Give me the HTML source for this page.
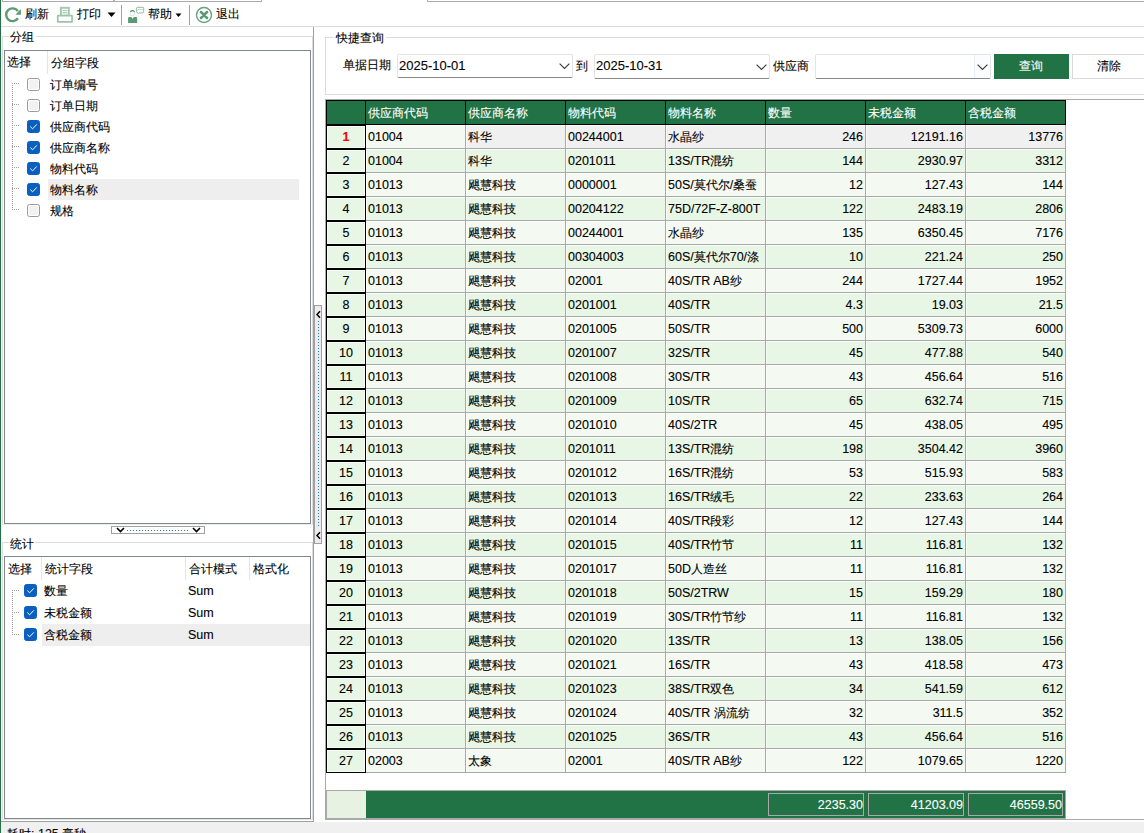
<!DOCTYPE html>
<html><head><meta charset="utf-8"><style>
html,body{margin:0;padding:0}
body{width:1144px;height:833px;overflow:hidden;position:relative;background:#fff;font-family:"Liberation Sans",sans-serif;font-size:12.5px;color:#000}
.a{position:absolute}
.t{position:absolute;line-height:20px;white-space:pre;-webkit-text-stroke:0.1px currentColor}
.c{font-size:12px}
.cb{position:absolute;width:11px;height:11px;border:1px solid #9a9a9a;border-radius:2.5px;background:#f2f2f2;box-shadow:inset 0 0 0 1px #fff}
.cb.on{background:#0a60c0;border-color:#0a60c0;box-shadow:none}
.cb svg{position:absolute;left:-1px;top:-1px}
.dh{height:1px;background:repeating-linear-gradient(90deg,#a0a0a0 0 1px,transparent 1px 2px)}
.dv{width:1px;background:repeating-linear-gradient(180deg,#a0a0a0 0 1px,transparent 1px 2px)}
</style></head><body>
<div class="a" style="left:2px;top:1px;width:260px;height:1px;background:#ababab;"></div>
<div class="a" style="left:113px;top:0px;width:2px;height:1px;background:#b4b4b4;"></div>
<div class="a" style="left:2px;top:0px;width:1px;height:2px;background:#ababab;"></div>
<div class="a" style="left:261px;top:0px;width:1px;height:2px;background:#ababab;"></div>
<div class="a" style="left:427px;top:1px;width:717px;height:1px;background:#ababab;"></div>
<div class="a" style="left:427px;top:0px;width:1px;height:2px;background:#ababab;"></div>
<div class="a" style="left:0px;top:0px;width:1px;height:833px;background:#217346;"></div>
<div class="a" style="left:1px;top:26px;width:1143px;height:1px;background:#dcdcdc;"></div>
<svg class="a" style="left:4px;top:6px" width="18" height="18" viewBox="0 0 18 18">
<path d="M13.93 12.24 A6.4 6.4 0 1 1 13.9 5.2" fill="none" stroke="#5b9a72" stroke-width="2.4"/>
<path d="M16.9 3 L16.9 8.8 L11.4 8.8 Z" fill="#5b9a72"/></svg>
<div class="t" style="left:25px;top:4px;color:#000;"><span class="c">刷新</span></div>
<svg class="a" style="left:56px;top:6px" width="18" height="18" viewBox="0 0 18 18">
<rect x="4.9" y="1.8" width="7.9" height="8" fill="#fff" stroke="#a3c9b0" stroke-width="1.9"/>
<rect x="6.4" y="4" width="5" height="0.9" fill="#a3c9b0"/><rect x="6.4" y="6.1" width="5" height="0.9" fill="#a3c9b0"/>
<rect x="6.4" y="7.2" width="5" height="2" fill="#dcebe1"/>
<rect x="1.75" y="9.65" width="14.3" height="6.2" rx="0.4" fill="#fff" stroke="#9cc5a9" stroke-width="1.7"/></svg>
<div class="t" style="left:77px;top:4px;color:#000;"><span class="c">打印</span></div>
<svg class="a" style="left:107px;top:12px" width="10" height="6"><path d="M0.5 0.5 L8.5 0.5 L4.5 5 Z" fill="#000"/></svg>
<div class="a" style="left:121px;top:5px;width:1px;height:20px;background:#a0a0a0;"></div>
<svg class="a" style="left:126px;top:6px" width="20" height="18" viewBox="0 0 20 18">
<path d="M10.6 2.2 Q10.6 1.3 11.6 1.3 L16.8 1.3 Q17.7 1.3 17.7 2.2 L17.7 5.6 Q17.7 6.9 16.4 6.9 L13.2 6.9 L12.4 7.6 L11.9 6.9 Q10.6 6.9 10.6 5.6 Z" fill="#fff" stroke="#7fb48f" stroke-width="0.9"/>
<rect x="11.6" y="3.1" width="5.2" height="0.7" fill="#a9cdb5"/>
<circle cx="6.3" cy="7.6" r="2.3" fill="#fff" stroke="#d5e7db" stroke-width="0.8"/>
<path d="M3.9 6.6 Q3.8 3.9 6.4 3.9 Q9 3.9 8.8 6.6 Q8.2 5.4 6.3 5.3 Q4.5 5.4 3.9 6.6 Z" fill="#4f8f66"/>
<path d="M2.1 16.9 L2.1 12.2 Q2.1 10.9 3.5 10.9 L5.4 10.9 L6.6 13.2 L7.8 10.9 L9.8 10.9 Q11.2 10.9 11.2 12.2 L11.2 16.9 Z" fill="#5b9a72"/>
<path d="M6.2 12.5 L6.6 16 L7 12.5 Z" fill="#5b9a72"/></svg>
<div class="t" style="left:148px;top:4px;color:#000;"><span class="c">帮助</span></div>
<svg class="a" style="left:175px;top:13px" width="8" height="5"><path d="M0.5 0.5 L6.5 0.5 L3.5 4 Z" fill="#000"/></svg>
<div class="a" style="left:189px;top:5px;width:1px;height:20px;background:#a0a0a0;"></div>
<svg class="a" style="left:195px;top:6px" width="18" height="18" viewBox="0 0 18 18">
<circle cx="9" cy="9" r="7.5" fill="none" stroke="#68a27e" stroke-width="1.4"/>
<path d="M6 6 L12 12 M12 6 L6 12" stroke="#5b9a72" stroke-width="2.5" stroke-linecap="round"/><rect x="7.4" y="7.4" width="3.2" height="3.2" fill="#5b9a72"/></svg>
<div class="t" style="left:216px;top:4px;color:#000;"><span class="c">退出</span></div>
<div class="a" style="left:313px;top:27px;width:1px;height:795px;background:#a0a0a0;"></div>
<div class="a" style="left:1px;top:821px;width:313px;height:1px;background:#a0a0a0;"></div>
<div class="a" style="left:2px;top:36px;width:7px;height:1px;background:#dcdcdc;"></div>
<div class="a" style="left:36px;top:36px;width:277px;height:1px;background:#dcdcdc;"></div>
<div class="a" style="left:2px;top:36px;width:1px;height:489px;background:#dcdcdc;"></div>
<div class="a" style="left:312px;top:36px;width:1px;height:489px;background:#dcdcdc;"></div>
<div class="t" style="left:10px;top:27px;color:#000;"><span class="c">分组</span></div>
<div class="a" style="left:4px;top:50px;width:305px;height:472px;border:1px solid #828790;background:#fff"></div>
<div class="a" style="left:2px;top:524px;width:311px;height:1px;background:#ececec;"></div>
<div class="t" style="left:7px;top:52px;color:#000;"><span class="c">选择</span></div>
<div class="a" style="left:47px;top:51px;width:1px;height:23px;background:#e5e5e5;"></div>
<div class="t" style="left:51px;top:53px;color:#000;"><span class="c">分组字段</span></div>
<div class="a" style="left:48px;top:179px;width:251px;height:21px;background:#eeeeee;"></div>
<div class="cb" style="left:27px;top:78px"></div>
<div class="t" style="left:50px;top:75px;color:#000;"><span class="c">订单编号</span></div>
<div class="a dh" style="left:12px;top:83px;width:8px"></div>
<div class="cb" style="left:27px;top:99px"></div>
<div class="t" style="left:50px;top:96px;color:#000;"><span class="c">订单日期</span></div>
<div class="a dh" style="left:12px;top:104px;width:8px"></div>
<div class="cb on" style="left:27px;top:120px"><svg width="13" height="13"><path d="M3.3 6.6 L5.6 8.8 L9.8 4.4" fill="none" stroke="#fff" stroke-width="1"/></svg></div>
<div class="t" style="left:50px;top:117px;color:#000;"><span class="c">供应商代码</span></div>
<div class="a dh" style="left:12px;top:125px;width:8px"></div>
<div class="cb on" style="left:27px;top:141px"><svg width="13" height="13"><path d="M3.3 6.6 L5.6 8.8 L9.8 4.4" fill="none" stroke="#fff" stroke-width="1"/></svg></div>
<div class="t" style="left:50px;top:138px;color:#000;"><span class="c">供应商名称</span></div>
<div class="a dh" style="left:12px;top:146px;width:8px"></div>
<div class="cb on" style="left:27px;top:162px"><svg width="13" height="13"><path d="M3.3 6.6 L5.6 8.8 L9.8 4.4" fill="none" stroke="#fff" stroke-width="1"/></svg></div>
<div class="t" style="left:50px;top:159px;color:#000;"><span class="c">物料代码</span></div>
<div class="a dh" style="left:12px;top:167px;width:8px"></div>
<div class="cb on" style="left:27px;top:183px"><svg width="13" height="13"><path d="M3.3 6.6 L5.6 8.8 L9.8 4.4" fill="none" stroke="#fff" stroke-width="1"/></svg></div>
<div class="t" style="left:50px;top:180px;color:#000;"><span class="c">物料名称</span></div>
<div class="a dh" style="left:12px;top:188px;width:8px"></div>
<div class="cb" style="left:27px;top:204px"></div>
<div class="t" style="left:50px;top:201px;color:#000;"><span class="c">规格</span></div>
<div class="a dh" style="left:12px;top:209px;width:8px"></div>
<div class="a dv" style="left:12px;top:83px;height:127px"></div>
<div class="a" style="left:111px;top:526px;width:92px;height:6px;border:1px solid #a0a0a0;background:#fff"></div>
<svg class="a" style="left:116px;top:527px" width="10" height="6"><path d="M1 1 L4.5 4.5 L8 1" fill="none" stroke="#000" stroke-width="1.6"/></svg>
<svg class="a" style="left:192px;top:527px" width="10" height="6"><path d="M1 1 L4.5 4.5 L8 1" fill="none" stroke="#000" stroke-width="1.6"/></svg>
<div class="a" style="left:127px;top:530px;width:62px;height:1px;background:repeating-linear-gradient(90deg,#1a7fe0 0 1px,transparent 1px 3px)"></div>
<div class="a" style="left:2px;top:542px;width:7px;height:1px;background:#dcdcdc;"></div>
<div class="a" style="left:35px;top:542px;width:278px;height:1px;background:#dcdcdc;"></div>
<div class="a" style="left:2px;top:542px;width:1px;height:278px;background:#dcdcdc;"></div>
<div class="a" style="left:312px;top:542px;width:1px;height:278px;background:#dcdcdc;"></div>
<div class="a" style="left:2px;top:819px;width:311px;height:1px;background:#e4e4e4;"></div>
<div class="t" style="left:10px;top:534px;color:#000;"><span class="c">统计</span></div>
<div class="a" style="left:4px;top:556px;width:305px;height:261px;border:1px solid #828790;background:#fff"></div>
<div class="t" style="left:8px;top:559px;color:#000;"><span class="c">选择</span></div>
<div class="a" style="left:41px;top:557px;width:1px;height:23px;background:#e5e5e5;"></div>
<div class="t" style="left:45px;top:559px;color:#000;"><span class="c">统计字段</span></div>
<div class="a" style="left:185px;top:557px;width:1px;height:23px;background:#e5e5e5;"></div>
<div class="t" style="left:189px;top:559px;color:#000;"><span class="c">合计模式</span></div>
<div class="a" style="left:249px;top:557px;width:1px;height:23px;background:#e5e5e5;"></div>
<div class="t" style="left:253px;top:559px;color:#000;"><span class="c">格式化</span></div>
<div class="a" style="left:42px;top:624px;width:268px;height:22px;background:#eeeeee;"></div>
<div class="cb on" style="left:24px;top:584px"><svg width="13" height="13"><path d="M3.3 6.6 L5.6 8.8 L9.8 4.4" fill="none" stroke="#fff" stroke-width="1"/></svg></div>
<div class="t" style="left:44px;top:581px;color:#000;"><span class="c">数量</span></div>
<div class="t" style="left:188px;top:581px;color:#000;">Sum</div>
<div class="a dh" style="left:12px;top:590px;width:8px"></div>
<div class="cb on" style="left:24px;top:606px"><svg width="13" height="13"><path d="M3.3 6.6 L5.6 8.8 L9.8 4.4" fill="none" stroke="#fff" stroke-width="1"/></svg></div>
<div class="t" style="left:44px;top:603px;color:#000;"><span class="c">未税金额</span></div>
<div class="t" style="left:188px;top:603px;color:#000;">Sum</div>
<div class="a dh" style="left:12px;top:612px;width:8px"></div>
<div class="cb on" style="left:24px;top:628px"><svg width="13" height="13"><path d="M3.3 6.6 L5.6 8.8 L9.8 4.4" fill="none" stroke="#fff" stroke-width="1"/></svg></div>
<div class="t" style="left:44px;top:625px;color:#000;"><span class="c">含税金额</span></div>
<div class="t" style="left:188px;top:625px;color:#000;">Sum</div>
<div class="a dh" style="left:12px;top:634px;width:8px"></div>
<div class="a dv" style="left:12px;top:590px;height:45px"></div>
<div class="a" style="left:1px;top:822px;width:1143px;height:11px;background:#f0f0f0;"></div>
<div class="t" style="left:7px;top:824px;color:#000;"><span class="c">耗时</span>: 125 <span class="c">毫秒</span></div>
<div class="a" style="left:314px;top:305px;width:6px;height:237px;border:1px solid #a0a0a0;background:#ececec"></div>
<svg class="a" style="left:316px;top:310px" width="6" height="10"><path d="M4 1.2 L1 4.5 L4 7.8" fill="none" stroke="#000" stroke-width="1.5"/></svg>
<svg class="a" style="left:316px;top:531px" width="6" height="10"><path d="M4 1.2 L1 4.5 L4 7.8" fill="none" stroke="#000" stroke-width="1.5"/></svg>
<div class="a" style="left:318px;top:321px;width:1px;height:206px;background:repeating-linear-gradient(180deg,#1a7fe0 0 1px,transparent 1px 3px)"></div>
<div class="a" style="left:325px;top:37px;width:9px;height:1px;background:#dcdcdc;"></div>
<div class="a" style="left:386px;top:37px;width:758px;height:1px;background:#dcdcdc;"></div>
<div class="a" style="left:325px;top:37px;width:1px;height:58px;background:#dcdcdc;"></div>
<div class="a" style="left:325px;top:94px;width:819px;height:1px;background:#dcdcdc;"></div>
<div class="t" style="left:336px;top:28px;color:#000;"><span class="c">快捷查询</span></div>
<div class="t" style="left:343px;top:55px;color:#000;"><span class="c">单据日期</span></div>
<div class="a" style="left:397px;top:54px;width:174px;height:22px;border:1px solid #e3e3e3;border-bottom-color:#868686;border-radius:2px;background:#fff"></div>
<svg class="a" style="left:559px;top:63px" width="11" height="7"><path d="M0.6 0.6 L5.5 5.5 L10.4 0.6" fill="none" stroke="#3c3c3c" stroke-width="1.15"/></svg>
<div class="t" style="left:399px;top:56px;color:#000;font-size:13px">2025-10-01</div>
<div class="t" style="left:576px;top:56px;color:#000;"><span class="c">到</span></div>
<div class="a" style="left:594px;top:54px;width:174px;height:23px;border:1px solid #e3e3e3;border-bottom-color:#868686;border-radius:2px;background:#fff"></div>
<svg class="a" style="left:756px;top:64px" width="11" height="7"><path d="M0.6 0.6 L5.5 5.5 L10.4 0.6" fill="none" stroke="#3c3c3c" stroke-width="1.15"/></svg>
<div class="t" style="left:596px;top:56px;color:#000;font-size:13px">2025-10-31</div>
<div class="t" style="left:773px;top:56px;color:#000;"><span class="c">供应商</span></div>
<div class="a" style="left:815px;top:54px;width:174px;height:23px;border:1px solid #e3e3e3;border-bottom-color:#868686;border-radius:2px;background:#fff"></div>
<svg class="a" style="left:977px;top:64px" width="11" height="7"><path d="M0.6 0.6 L5.5 5.5 L10.4 0.6" fill="none" stroke="#3c3c3c" stroke-width="1.15"/></svg>
<div class="a" style="left:974px;top:55px;width:1px;height:23px;background:#e8eef6;"></div>
<div class="a" style="left:975px;top:55px;width:15px;height:23px;background:#fbfcfd;"></div>
<svg class="a" style="left:977px;top:64px" width="11" height="7"><path d="M0.6 0.6 L5.5 5.5 L10.4 0.6" fill="none" stroke="#3c3c3c" stroke-width="1.15"/></svg>
<div class="a" style="left:994px;top:54px;width:75px;height:25px;background:#217346;"></div>
<div class="t" style="left:1019px;top:56px;color:#fff;"><span class="c">查询</span></div>
<div class="a" style="left:1072px;top:54px;width:90px;height:23px;border:1px solid #d9d9d9;background:#fff"></div>
<div class="t" style="left:1097px;top:56px;color:#000;"><span class="c">清除</span></div>
<div class="a" style="left:325px;top:99px;width:819px;height:1px;background:#a9a9a9;"></div>
<div class="a" style="left:325px;top:99px;width:1px;height:721px;background:#a9a9a9;"></div>
<div class="a" style="left:326px;top:100px;width:740px;height:25px;background:#000;"></div>
<div class="a" style="left:327px;top:101px;width:38px;height:23px;background:#217346;"></div>
<div class="a" style="left:366px;top:101px;width:99px;height:23px;background:#217346;"></div>
<div class="t" style="left:368px;top:103px;color:#fff;"><span class="c">供应商代码</span></div>
<div class="a" style="left:466px;top:101px;width:99px;height:23px;background:#217346;"></div>
<div class="t" style="left:468px;top:103px;color:#fff;"><span class="c">供应商名称</span></div>
<div class="a" style="left:566px;top:101px;width:99px;height:23px;background:#217346;"></div>
<div class="t" style="left:568px;top:103px;color:#fff;"><span class="c">物料代码</span></div>
<div class="a" style="left:666px;top:101px;width:99px;height:23px;background:#217346;"></div>
<div class="t" style="left:668px;top:103px;color:#fff;"><span class="c">物料名称</span></div>
<div class="a" style="left:766px;top:101px;width:99px;height:23px;background:#217346;"></div>
<div class="t" style="left:768px;top:103px;color:#fff;"><span class="c">数量</span></div>
<div class="a" style="left:866px;top:101px;width:99px;height:23px;background:#217346;"></div>
<div class="t" style="left:868px;top:103px;color:#fff;"><span class="c">未税金额</span></div>
<div class="a" style="left:966px;top:101px;width:99px;height:23px;background:#217346;"></div>
<div class="t" style="left:968px;top:103px;color:#fff;"><span class="c">含税金额</span></div>
<div class="a" style="left:327px;top:126px;width:38px;height:22px;background:#e8f6e5;box-shadow:inset 0 0 0 1px #f7fbf5"></div>
<div class="t" style="left:246px;width:200px;text-align:center;top:127px;color:#ff0000;font-weight:bold">1</div>
<div class="a" style="left:366px;top:125px;width:99px;height:23px;background:#f4faf2;box-shadow:inset 1px 1px 0 rgba(255,255,255,.7)"></div>
<div class="t" style="left:368px;top:127px;color:#000;">01004</div>
<div class="a" style="left:466px;top:125px;width:99px;height:23px;background:#f0f0f0;box-shadow:inset 1px 1px 0 rgba(255,255,255,.7)"></div>
<div class="t" style="left:468px;top:127px;color:#000;"><span class="c">科华</span></div>
<div class="a" style="left:566px;top:125px;width:99px;height:23px;background:#f0f0f0;box-shadow:inset 1px 1px 0 rgba(255,255,255,.7)"></div>
<div class="t" style="left:568px;top:127px;color:#000;">00244001</div>
<div class="a" style="left:666px;top:125px;width:99px;height:23px;background:#f0f0f0;box-shadow:inset 1px 1px 0 rgba(255,255,255,.7)"></div>
<div class="t" style="left:668px;top:127px;color:#000;"><span class="c">水晶纱</span></div>
<div class="a" style="left:766px;top:125px;width:99px;height:23px;background:#f0f0f0;box-shadow:inset 1px 1px 0 rgba(255,255,255,.7)"></div>
<div class="t" style="left:663px;width:200px;text-align:right;top:127px;color:#000;">246</div>
<div class="a" style="left:866px;top:125px;width:99px;height:23px;background:#f0f0f0;box-shadow:inset 1px 1px 0 rgba(255,255,255,.7)"></div>
<div class="t" style="left:763px;width:200px;text-align:right;top:127px;color:#000;">12191.16</div>
<div class="a" style="left:966px;top:125px;width:99px;height:23px;background:#f0f0f0;box-shadow:inset 1px 1px 0 rgba(255,255,255,.7)"></div>
<div class="t" style="left:863px;width:200px;text-align:right;top:127px;color:#000;">13776</div>
<div class="a" style="left:366px;top:148px;width:700px;height:1px;background:#a9a9a9;"></div>
<div class="a" style="left:365px;top:125px;width:1px;height:24px;background:#000;"></div>
<div class="a" style="left:465px;top:125px;width:1px;height:24px;background:#a9a9a9;"></div>
<div class="a" style="left:565px;top:125px;width:1px;height:24px;background:#a9a9a9;"></div>
<div class="a" style="left:665px;top:125px;width:1px;height:24px;background:#a9a9a9;"></div>
<div class="a" style="left:765px;top:125px;width:1px;height:24px;background:#a9a9a9;"></div>
<div class="a" style="left:865px;top:125px;width:1px;height:24px;background:#a9a9a9;"></div>
<div class="a" style="left:965px;top:125px;width:1px;height:24px;background:#a9a9a9;"></div>
<div class="a" style="left:1065px;top:125px;width:1px;height:24px;background:#a9a9a9;"></div>
<div class="a" style="left:327px;top:150px;width:38px;height:22px;background:#e8f6e5;box-shadow:inset 0 0 0 1px #f7fbf5"></div>
<div class="t" style="left:246px;width:200px;text-align:center;top:151px;color:#000;">2</div>
<div class="a" style="left:366px;top:149px;width:99px;height:23px;background:#e8f6e5;box-shadow:inset 1px 1px 0 rgba(255,255,255,.7)"></div>
<div class="t" style="left:368px;top:151px;color:#000;">01004</div>
<div class="a" style="left:466px;top:149px;width:99px;height:23px;background:#e8f6e5;box-shadow:inset 1px 1px 0 rgba(255,255,255,.7)"></div>
<div class="t" style="left:468px;top:151px;color:#000;"><span class="c">科华</span></div>
<div class="a" style="left:566px;top:149px;width:99px;height:23px;background:#e8f6e5;box-shadow:inset 1px 1px 0 rgba(255,255,255,.7)"></div>
<div class="t" style="left:568px;top:151px;color:#000;">0201011</div>
<div class="a" style="left:666px;top:149px;width:99px;height:23px;background:#e8f6e5;box-shadow:inset 1px 1px 0 rgba(255,255,255,.7)"></div>
<div class="t" style="left:668px;top:151px;color:#000;">13S/TR<span class="c">混纺</span></div>
<div class="a" style="left:766px;top:149px;width:99px;height:23px;background:#e8f6e5;box-shadow:inset 1px 1px 0 rgba(255,255,255,.7)"></div>
<div class="t" style="left:663px;width:200px;text-align:right;top:151px;color:#000;">144</div>
<div class="a" style="left:866px;top:149px;width:99px;height:23px;background:#e8f6e5;box-shadow:inset 1px 1px 0 rgba(255,255,255,.7)"></div>
<div class="t" style="left:763px;width:200px;text-align:right;top:151px;color:#000;">2930.97</div>
<div class="a" style="left:966px;top:149px;width:99px;height:23px;background:#e8f6e5;box-shadow:inset 1px 1px 0 rgba(255,255,255,.7)"></div>
<div class="t" style="left:863px;width:200px;text-align:right;top:151px;color:#000;">3312</div>
<div class="a" style="left:366px;top:172px;width:700px;height:1px;background:#a9a9a9;"></div>
<div class="a" style="left:365px;top:149px;width:1px;height:24px;background:#000;"></div>
<div class="a" style="left:465px;top:149px;width:1px;height:24px;background:#a9a9a9;"></div>
<div class="a" style="left:565px;top:149px;width:1px;height:24px;background:#a9a9a9;"></div>
<div class="a" style="left:665px;top:149px;width:1px;height:24px;background:#a9a9a9;"></div>
<div class="a" style="left:765px;top:149px;width:1px;height:24px;background:#a9a9a9;"></div>
<div class="a" style="left:865px;top:149px;width:1px;height:24px;background:#a9a9a9;"></div>
<div class="a" style="left:965px;top:149px;width:1px;height:24px;background:#a9a9a9;"></div>
<div class="a" style="left:1065px;top:149px;width:1px;height:24px;background:#a9a9a9;"></div>
<div class="a" style="left:327px;top:174px;width:38px;height:22px;background:#e8f6e5;box-shadow:inset 0 0 0 1px #f7fbf5"></div>
<div class="t" style="left:246px;width:200px;text-align:center;top:175px;color:#000;">3</div>
<div class="a" style="left:366px;top:173px;width:99px;height:23px;background:#f4faf2;box-shadow:inset 1px 1px 0 rgba(255,255,255,.7)"></div>
<div class="t" style="left:368px;top:175px;color:#000;">01013</div>
<div class="a" style="left:466px;top:173px;width:99px;height:23px;background:#f4faf2;box-shadow:inset 1px 1px 0 rgba(255,255,255,.7)"></div>
<div class="t" style="left:468px;top:175px;color:#000;"><span class="c">飓慧科技</span></div>
<div class="a" style="left:566px;top:173px;width:99px;height:23px;background:#f4faf2;box-shadow:inset 1px 1px 0 rgba(255,255,255,.7)"></div>
<div class="t" style="left:568px;top:175px;color:#000;">0000001</div>
<div class="a" style="left:666px;top:173px;width:99px;height:23px;background:#f4faf2;box-shadow:inset 1px 1px 0 rgba(255,255,255,.7)"></div>
<div class="t" style="left:668px;top:175px;color:#000;">50S/<span class="c">莫代尔</span>/<span class="c">桑蚕</span></div>
<div class="a" style="left:766px;top:173px;width:99px;height:23px;background:#f4faf2;box-shadow:inset 1px 1px 0 rgba(255,255,255,.7)"></div>
<div class="t" style="left:663px;width:200px;text-align:right;top:175px;color:#000;">12</div>
<div class="a" style="left:866px;top:173px;width:99px;height:23px;background:#f4faf2;box-shadow:inset 1px 1px 0 rgba(255,255,255,.7)"></div>
<div class="t" style="left:763px;width:200px;text-align:right;top:175px;color:#000;">127.43</div>
<div class="a" style="left:966px;top:173px;width:99px;height:23px;background:#f4faf2;box-shadow:inset 1px 1px 0 rgba(255,255,255,.7)"></div>
<div class="t" style="left:863px;width:200px;text-align:right;top:175px;color:#000;">144</div>
<div class="a" style="left:366px;top:196px;width:700px;height:1px;background:#a9a9a9;"></div>
<div class="a" style="left:365px;top:173px;width:1px;height:24px;background:#000;"></div>
<div class="a" style="left:465px;top:173px;width:1px;height:24px;background:#a9a9a9;"></div>
<div class="a" style="left:565px;top:173px;width:1px;height:24px;background:#a9a9a9;"></div>
<div class="a" style="left:665px;top:173px;width:1px;height:24px;background:#a9a9a9;"></div>
<div class="a" style="left:765px;top:173px;width:1px;height:24px;background:#a9a9a9;"></div>
<div class="a" style="left:865px;top:173px;width:1px;height:24px;background:#a9a9a9;"></div>
<div class="a" style="left:965px;top:173px;width:1px;height:24px;background:#a9a9a9;"></div>
<div class="a" style="left:1065px;top:173px;width:1px;height:24px;background:#a9a9a9;"></div>
<div class="a" style="left:327px;top:198px;width:38px;height:22px;background:#e8f6e5;box-shadow:inset 0 0 0 1px #f7fbf5"></div>
<div class="t" style="left:246px;width:200px;text-align:center;top:199px;color:#000;">4</div>
<div class="a" style="left:366px;top:197px;width:99px;height:23px;background:#e8f6e5;box-shadow:inset 1px 1px 0 rgba(255,255,255,.7)"></div>
<div class="t" style="left:368px;top:199px;color:#000;">01013</div>
<div class="a" style="left:466px;top:197px;width:99px;height:23px;background:#e8f6e5;box-shadow:inset 1px 1px 0 rgba(255,255,255,.7)"></div>
<div class="t" style="left:468px;top:199px;color:#000;"><span class="c">飓慧科技</span></div>
<div class="a" style="left:566px;top:197px;width:99px;height:23px;background:#e8f6e5;box-shadow:inset 1px 1px 0 rgba(255,255,255,.7)"></div>
<div class="t" style="left:568px;top:199px;color:#000;">00204122</div>
<div class="a" style="left:666px;top:197px;width:99px;height:23px;background:#e8f6e5;box-shadow:inset 1px 1px 0 rgba(255,255,255,.7)"></div>
<div class="t" style="left:668px;top:199px;color:#000;">75D/72F-Z-800T</div>
<div class="a" style="left:766px;top:197px;width:99px;height:23px;background:#e8f6e5;box-shadow:inset 1px 1px 0 rgba(255,255,255,.7)"></div>
<div class="t" style="left:663px;width:200px;text-align:right;top:199px;color:#000;">122</div>
<div class="a" style="left:866px;top:197px;width:99px;height:23px;background:#e8f6e5;box-shadow:inset 1px 1px 0 rgba(255,255,255,.7)"></div>
<div class="t" style="left:763px;width:200px;text-align:right;top:199px;color:#000;">2483.19</div>
<div class="a" style="left:966px;top:197px;width:99px;height:23px;background:#e8f6e5;box-shadow:inset 1px 1px 0 rgba(255,255,255,.7)"></div>
<div class="t" style="left:863px;width:200px;text-align:right;top:199px;color:#000;">2806</div>
<div class="a" style="left:366px;top:220px;width:700px;height:1px;background:#a9a9a9;"></div>
<div class="a" style="left:365px;top:197px;width:1px;height:24px;background:#000;"></div>
<div class="a" style="left:465px;top:197px;width:1px;height:24px;background:#a9a9a9;"></div>
<div class="a" style="left:565px;top:197px;width:1px;height:24px;background:#a9a9a9;"></div>
<div class="a" style="left:665px;top:197px;width:1px;height:24px;background:#a9a9a9;"></div>
<div class="a" style="left:765px;top:197px;width:1px;height:24px;background:#a9a9a9;"></div>
<div class="a" style="left:865px;top:197px;width:1px;height:24px;background:#a9a9a9;"></div>
<div class="a" style="left:965px;top:197px;width:1px;height:24px;background:#a9a9a9;"></div>
<div class="a" style="left:1065px;top:197px;width:1px;height:24px;background:#a9a9a9;"></div>
<div class="a" style="left:327px;top:222px;width:38px;height:22px;background:#e8f6e5;box-shadow:inset 0 0 0 1px #f7fbf5"></div>
<div class="t" style="left:246px;width:200px;text-align:center;top:223px;color:#000;">5</div>
<div class="a" style="left:366px;top:221px;width:99px;height:23px;background:#f4faf2;box-shadow:inset 1px 1px 0 rgba(255,255,255,.7)"></div>
<div class="t" style="left:368px;top:223px;color:#000;">01013</div>
<div class="a" style="left:466px;top:221px;width:99px;height:23px;background:#f4faf2;box-shadow:inset 1px 1px 0 rgba(255,255,255,.7)"></div>
<div class="t" style="left:468px;top:223px;color:#000;"><span class="c">飓慧科技</span></div>
<div class="a" style="left:566px;top:221px;width:99px;height:23px;background:#f4faf2;box-shadow:inset 1px 1px 0 rgba(255,255,255,.7)"></div>
<div class="t" style="left:568px;top:223px;color:#000;">00244001</div>
<div class="a" style="left:666px;top:221px;width:99px;height:23px;background:#f4faf2;box-shadow:inset 1px 1px 0 rgba(255,255,255,.7)"></div>
<div class="t" style="left:668px;top:223px;color:#000;"><span class="c">水晶纱</span></div>
<div class="a" style="left:766px;top:221px;width:99px;height:23px;background:#f4faf2;box-shadow:inset 1px 1px 0 rgba(255,255,255,.7)"></div>
<div class="t" style="left:663px;width:200px;text-align:right;top:223px;color:#000;">135</div>
<div class="a" style="left:866px;top:221px;width:99px;height:23px;background:#f4faf2;box-shadow:inset 1px 1px 0 rgba(255,255,255,.7)"></div>
<div class="t" style="left:763px;width:200px;text-align:right;top:223px;color:#000;">6350.45</div>
<div class="a" style="left:966px;top:221px;width:99px;height:23px;background:#f4faf2;box-shadow:inset 1px 1px 0 rgba(255,255,255,.7)"></div>
<div class="t" style="left:863px;width:200px;text-align:right;top:223px;color:#000;">7176</div>
<div class="a" style="left:366px;top:244px;width:700px;height:1px;background:#a9a9a9;"></div>
<div class="a" style="left:365px;top:221px;width:1px;height:24px;background:#000;"></div>
<div class="a" style="left:465px;top:221px;width:1px;height:24px;background:#a9a9a9;"></div>
<div class="a" style="left:565px;top:221px;width:1px;height:24px;background:#a9a9a9;"></div>
<div class="a" style="left:665px;top:221px;width:1px;height:24px;background:#a9a9a9;"></div>
<div class="a" style="left:765px;top:221px;width:1px;height:24px;background:#a9a9a9;"></div>
<div class="a" style="left:865px;top:221px;width:1px;height:24px;background:#a9a9a9;"></div>
<div class="a" style="left:965px;top:221px;width:1px;height:24px;background:#a9a9a9;"></div>
<div class="a" style="left:1065px;top:221px;width:1px;height:24px;background:#a9a9a9;"></div>
<div class="a" style="left:327px;top:246px;width:38px;height:22px;background:#e8f6e5;box-shadow:inset 0 0 0 1px #f7fbf5"></div>
<div class="t" style="left:246px;width:200px;text-align:center;top:247px;color:#000;">6</div>
<div class="a" style="left:366px;top:245px;width:99px;height:23px;background:#e8f6e5;box-shadow:inset 1px 1px 0 rgba(255,255,255,.7)"></div>
<div class="t" style="left:368px;top:247px;color:#000;">01013</div>
<div class="a" style="left:466px;top:245px;width:99px;height:23px;background:#e8f6e5;box-shadow:inset 1px 1px 0 rgba(255,255,255,.7)"></div>
<div class="t" style="left:468px;top:247px;color:#000;"><span class="c">飓慧科技</span></div>
<div class="a" style="left:566px;top:245px;width:99px;height:23px;background:#e8f6e5;box-shadow:inset 1px 1px 0 rgba(255,255,255,.7)"></div>
<div class="t" style="left:568px;top:247px;color:#000;">00304003</div>
<div class="a" style="left:666px;top:245px;width:99px;height:23px;background:#e8f6e5;box-shadow:inset 1px 1px 0 rgba(255,255,255,.7)"></div>
<div class="t" style="left:668px;top:247px;color:#000;">60S/<span class="c">莫代尔</span>70/<span class="c">涤</span></div>
<div class="a" style="left:766px;top:245px;width:99px;height:23px;background:#e8f6e5;box-shadow:inset 1px 1px 0 rgba(255,255,255,.7)"></div>
<div class="t" style="left:663px;width:200px;text-align:right;top:247px;color:#000;">10</div>
<div class="a" style="left:866px;top:245px;width:99px;height:23px;background:#e8f6e5;box-shadow:inset 1px 1px 0 rgba(255,255,255,.7)"></div>
<div class="t" style="left:763px;width:200px;text-align:right;top:247px;color:#000;">221.24</div>
<div class="a" style="left:966px;top:245px;width:99px;height:23px;background:#e8f6e5;box-shadow:inset 1px 1px 0 rgba(255,255,255,.7)"></div>
<div class="t" style="left:863px;width:200px;text-align:right;top:247px;color:#000;">250</div>
<div class="a" style="left:366px;top:268px;width:700px;height:1px;background:#a9a9a9;"></div>
<div class="a" style="left:365px;top:245px;width:1px;height:24px;background:#000;"></div>
<div class="a" style="left:465px;top:245px;width:1px;height:24px;background:#a9a9a9;"></div>
<div class="a" style="left:565px;top:245px;width:1px;height:24px;background:#a9a9a9;"></div>
<div class="a" style="left:665px;top:245px;width:1px;height:24px;background:#a9a9a9;"></div>
<div class="a" style="left:765px;top:245px;width:1px;height:24px;background:#a9a9a9;"></div>
<div class="a" style="left:865px;top:245px;width:1px;height:24px;background:#a9a9a9;"></div>
<div class="a" style="left:965px;top:245px;width:1px;height:24px;background:#a9a9a9;"></div>
<div class="a" style="left:1065px;top:245px;width:1px;height:24px;background:#a9a9a9;"></div>
<div class="a" style="left:327px;top:270px;width:38px;height:22px;background:#e8f6e5;box-shadow:inset 0 0 0 1px #f7fbf5"></div>
<div class="t" style="left:246px;width:200px;text-align:center;top:271px;color:#000;">7</div>
<div class="a" style="left:366px;top:269px;width:99px;height:23px;background:#f4faf2;box-shadow:inset 1px 1px 0 rgba(255,255,255,.7)"></div>
<div class="t" style="left:368px;top:271px;color:#000;">01013</div>
<div class="a" style="left:466px;top:269px;width:99px;height:23px;background:#f4faf2;box-shadow:inset 1px 1px 0 rgba(255,255,255,.7)"></div>
<div class="t" style="left:468px;top:271px;color:#000;"><span class="c">飓慧科技</span></div>
<div class="a" style="left:566px;top:269px;width:99px;height:23px;background:#f4faf2;box-shadow:inset 1px 1px 0 rgba(255,255,255,.7)"></div>
<div class="t" style="left:568px;top:271px;color:#000;">02001</div>
<div class="a" style="left:666px;top:269px;width:99px;height:23px;background:#f4faf2;box-shadow:inset 1px 1px 0 rgba(255,255,255,.7)"></div>
<div class="t" style="left:668px;top:271px;color:#000;">40S/TR AB<span class="c">纱</span></div>
<div class="a" style="left:766px;top:269px;width:99px;height:23px;background:#f4faf2;box-shadow:inset 1px 1px 0 rgba(255,255,255,.7)"></div>
<div class="t" style="left:663px;width:200px;text-align:right;top:271px;color:#000;">244</div>
<div class="a" style="left:866px;top:269px;width:99px;height:23px;background:#f4faf2;box-shadow:inset 1px 1px 0 rgba(255,255,255,.7)"></div>
<div class="t" style="left:763px;width:200px;text-align:right;top:271px;color:#000;">1727.44</div>
<div class="a" style="left:966px;top:269px;width:99px;height:23px;background:#f4faf2;box-shadow:inset 1px 1px 0 rgba(255,255,255,.7)"></div>
<div class="t" style="left:863px;width:200px;text-align:right;top:271px;color:#000;">1952</div>
<div class="a" style="left:366px;top:292px;width:700px;height:1px;background:#a9a9a9;"></div>
<div class="a" style="left:365px;top:269px;width:1px;height:24px;background:#000;"></div>
<div class="a" style="left:465px;top:269px;width:1px;height:24px;background:#a9a9a9;"></div>
<div class="a" style="left:565px;top:269px;width:1px;height:24px;background:#a9a9a9;"></div>
<div class="a" style="left:665px;top:269px;width:1px;height:24px;background:#a9a9a9;"></div>
<div class="a" style="left:765px;top:269px;width:1px;height:24px;background:#a9a9a9;"></div>
<div class="a" style="left:865px;top:269px;width:1px;height:24px;background:#a9a9a9;"></div>
<div class="a" style="left:965px;top:269px;width:1px;height:24px;background:#a9a9a9;"></div>
<div class="a" style="left:1065px;top:269px;width:1px;height:24px;background:#a9a9a9;"></div>
<div class="a" style="left:327px;top:294px;width:38px;height:22px;background:#e8f6e5;box-shadow:inset 0 0 0 1px #f7fbf5"></div>
<div class="t" style="left:246px;width:200px;text-align:center;top:295px;color:#000;">8</div>
<div class="a" style="left:366px;top:293px;width:99px;height:23px;background:#e8f6e5;box-shadow:inset 1px 1px 0 rgba(255,255,255,.7)"></div>
<div class="t" style="left:368px;top:295px;color:#000;">01013</div>
<div class="a" style="left:466px;top:293px;width:99px;height:23px;background:#e8f6e5;box-shadow:inset 1px 1px 0 rgba(255,255,255,.7)"></div>
<div class="t" style="left:468px;top:295px;color:#000;"><span class="c">飓慧科技</span></div>
<div class="a" style="left:566px;top:293px;width:99px;height:23px;background:#e8f6e5;box-shadow:inset 1px 1px 0 rgba(255,255,255,.7)"></div>
<div class="t" style="left:568px;top:295px;color:#000;">0201001</div>
<div class="a" style="left:666px;top:293px;width:99px;height:23px;background:#e8f6e5;box-shadow:inset 1px 1px 0 rgba(255,255,255,.7)"></div>
<div class="t" style="left:668px;top:295px;color:#000;">40S/TR</div>
<div class="a" style="left:766px;top:293px;width:99px;height:23px;background:#e8f6e5;box-shadow:inset 1px 1px 0 rgba(255,255,255,.7)"></div>
<div class="t" style="left:663px;width:200px;text-align:right;top:295px;color:#000;">4.3</div>
<div class="a" style="left:866px;top:293px;width:99px;height:23px;background:#e8f6e5;box-shadow:inset 1px 1px 0 rgba(255,255,255,.7)"></div>
<div class="t" style="left:763px;width:200px;text-align:right;top:295px;color:#000;">19.03</div>
<div class="a" style="left:966px;top:293px;width:99px;height:23px;background:#e8f6e5;box-shadow:inset 1px 1px 0 rgba(255,255,255,.7)"></div>
<div class="t" style="left:863px;width:200px;text-align:right;top:295px;color:#000;">21.5</div>
<div class="a" style="left:366px;top:316px;width:700px;height:1px;background:#a9a9a9;"></div>
<div class="a" style="left:365px;top:293px;width:1px;height:24px;background:#000;"></div>
<div class="a" style="left:465px;top:293px;width:1px;height:24px;background:#a9a9a9;"></div>
<div class="a" style="left:565px;top:293px;width:1px;height:24px;background:#a9a9a9;"></div>
<div class="a" style="left:665px;top:293px;width:1px;height:24px;background:#a9a9a9;"></div>
<div class="a" style="left:765px;top:293px;width:1px;height:24px;background:#a9a9a9;"></div>
<div class="a" style="left:865px;top:293px;width:1px;height:24px;background:#a9a9a9;"></div>
<div class="a" style="left:965px;top:293px;width:1px;height:24px;background:#a9a9a9;"></div>
<div class="a" style="left:1065px;top:293px;width:1px;height:24px;background:#a9a9a9;"></div>
<div class="a" style="left:327px;top:318px;width:38px;height:22px;background:#e8f6e5;box-shadow:inset 0 0 0 1px #f7fbf5"></div>
<div class="t" style="left:246px;width:200px;text-align:center;top:319px;color:#000;">9</div>
<div class="a" style="left:366px;top:317px;width:99px;height:23px;background:#f4faf2;box-shadow:inset 1px 1px 0 rgba(255,255,255,.7)"></div>
<div class="t" style="left:368px;top:319px;color:#000;">01013</div>
<div class="a" style="left:466px;top:317px;width:99px;height:23px;background:#f4faf2;box-shadow:inset 1px 1px 0 rgba(255,255,255,.7)"></div>
<div class="t" style="left:468px;top:319px;color:#000;"><span class="c">飓慧科技</span></div>
<div class="a" style="left:566px;top:317px;width:99px;height:23px;background:#f4faf2;box-shadow:inset 1px 1px 0 rgba(255,255,255,.7)"></div>
<div class="t" style="left:568px;top:319px;color:#000;">0201005</div>
<div class="a" style="left:666px;top:317px;width:99px;height:23px;background:#f4faf2;box-shadow:inset 1px 1px 0 rgba(255,255,255,.7)"></div>
<div class="t" style="left:668px;top:319px;color:#000;">50S/TR</div>
<div class="a" style="left:766px;top:317px;width:99px;height:23px;background:#f4faf2;box-shadow:inset 1px 1px 0 rgba(255,255,255,.7)"></div>
<div class="t" style="left:663px;width:200px;text-align:right;top:319px;color:#000;">500</div>
<div class="a" style="left:866px;top:317px;width:99px;height:23px;background:#f4faf2;box-shadow:inset 1px 1px 0 rgba(255,255,255,.7)"></div>
<div class="t" style="left:763px;width:200px;text-align:right;top:319px;color:#000;">5309.73</div>
<div class="a" style="left:966px;top:317px;width:99px;height:23px;background:#f4faf2;box-shadow:inset 1px 1px 0 rgba(255,255,255,.7)"></div>
<div class="t" style="left:863px;width:200px;text-align:right;top:319px;color:#000;">6000</div>
<div class="a" style="left:366px;top:340px;width:700px;height:1px;background:#a9a9a9;"></div>
<div class="a" style="left:365px;top:317px;width:1px;height:24px;background:#000;"></div>
<div class="a" style="left:465px;top:317px;width:1px;height:24px;background:#a9a9a9;"></div>
<div class="a" style="left:565px;top:317px;width:1px;height:24px;background:#a9a9a9;"></div>
<div class="a" style="left:665px;top:317px;width:1px;height:24px;background:#a9a9a9;"></div>
<div class="a" style="left:765px;top:317px;width:1px;height:24px;background:#a9a9a9;"></div>
<div class="a" style="left:865px;top:317px;width:1px;height:24px;background:#a9a9a9;"></div>
<div class="a" style="left:965px;top:317px;width:1px;height:24px;background:#a9a9a9;"></div>
<div class="a" style="left:1065px;top:317px;width:1px;height:24px;background:#a9a9a9;"></div>
<div class="a" style="left:327px;top:342px;width:38px;height:22px;background:#e8f6e5;box-shadow:inset 0 0 0 1px #f7fbf5"></div>
<div class="t" style="left:246px;width:200px;text-align:center;top:343px;color:#000;">10</div>
<div class="a" style="left:366px;top:341px;width:99px;height:23px;background:#e8f6e5;box-shadow:inset 1px 1px 0 rgba(255,255,255,.7)"></div>
<div class="t" style="left:368px;top:343px;color:#000;">01013</div>
<div class="a" style="left:466px;top:341px;width:99px;height:23px;background:#e8f6e5;box-shadow:inset 1px 1px 0 rgba(255,255,255,.7)"></div>
<div class="t" style="left:468px;top:343px;color:#000;"><span class="c">飓慧科技</span></div>
<div class="a" style="left:566px;top:341px;width:99px;height:23px;background:#e8f6e5;box-shadow:inset 1px 1px 0 rgba(255,255,255,.7)"></div>
<div class="t" style="left:568px;top:343px;color:#000;">0201007</div>
<div class="a" style="left:666px;top:341px;width:99px;height:23px;background:#e8f6e5;box-shadow:inset 1px 1px 0 rgba(255,255,255,.7)"></div>
<div class="t" style="left:668px;top:343px;color:#000;">32S/TR</div>
<div class="a" style="left:766px;top:341px;width:99px;height:23px;background:#e8f6e5;box-shadow:inset 1px 1px 0 rgba(255,255,255,.7)"></div>
<div class="t" style="left:663px;width:200px;text-align:right;top:343px;color:#000;">45</div>
<div class="a" style="left:866px;top:341px;width:99px;height:23px;background:#e8f6e5;box-shadow:inset 1px 1px 0 rgba(255,255,255,.7)"></div>
<div class="t" style="left:763px;width:200px;text-align:right;top:343px;color:#000;">477.88</div>
<div class="a" style="left:966px;top:341px;width:99px;height:23px;background:#e8f6e5;box-shadow:inset 1px 1px 0 rgba(255,255,255,.7)"></div>
<div class="t" style="left:863px;width:200px;text-align:right;top:343px;color:#000;">540</div>
<div class="a" style="left:366px;top:364px;width:700px;height:1px;background:#a9a9a9;"></div>
<div class="a" style="left:365px;top:341px;width:1px;height:24px;background:#000;"></div>
<div class="a" style="left:465px;top:341px;width:1px;height:24px;background:#a9a9a9;"></div>
<div class="a" style="left:565px;top:341px;width:1px;height:24px;background:#a9a9a9;"></div>
<div class="a" style="left:665px;top:341px;width:1px;height:24px;background:#a9a9a9;"></div>
<div class="a" style="left:765px;top:341px;width:1px;height:24px;background:#a9a9a9;"></div>
<div class="a" style="left:865px;top:341px;width:1px;height:24px;background:#a9a9a9;"></div>
<div class="a" style="left:965px;top:341px;width:1px;height:24px;background:#a9a9a9;"></div>
<div class="a" style="left:1065px;top:341px;width:1px;height:24px;background:#a9a9a9;"></div>
<div class="a" style="left:327px;top:366px;width:38px;height:22px;background:#e8f6e5;box-shadow:inset 0 0 0 1px #f7fbf5"></div>
<div class="t" style="left:246px;width:200px;text-align:center;top:367px;color:#000;">11</div>
<div class="a" style="left:366px;top:365px;width:99px;height:23px;background:#f4faf2;box-shadow:inset 1px 1px 0 rgba(255,255,255,.7)"></div>
<div class="t" style="left:368px;top:367px;color:#000;">01013</div>
<div class="a" style="left:466px;top:365px;width:99px;height:23px;background:#f4faf2;box-shadow:inset 1px 1px 0 rgba(255,255,255,.7)"></div>
<div class="t" style="left:468px;top:367px;color:#000;"><span class="c">飓慧科技</span></div>
<div class="a" style="left:566px;top:365px;width:99px;height:23px;background:#f4faf2;box-shadow:inset 1px 1px 0 rgba(255,255,255,.7)"></div>
<div class="t" style="left:568px;top:367px;color:#000;">0201008</div>
<div class="a" style="left:666px;top:365px;width:99px;height:23px;background:#f4faf2;box-shadow:inset 1px 1px 0 rgba(255,255,255,.7)"></div>
<div class="t" style="left:668px;top:367px;color:#000;">30S/TR</div>
<div class="a" style="left:766px;top:365px;width:99px;height:23px;background:#f4faf2;box-shadow:inset 1px 1px 0 rgba(255,255,255,.7)"></div>
<div class="t" style="left:663px;width:200px;text-align:right;top:367px;color:#000;">43</div>
<div class="a" style="left:866px;top:365px;width:99px;height:23px;background:#f4faf2;box-shadow:inset 1px 1px 0 rgba(255,255,255,.7)"></div>
<div class="t" style="left:763px;width:200px;text-align:right;top:367px;color:#000;">456.64</div>
<div class="a" style="left:966px;top:365px;width:99px;height:23px;background:#f4faf2;box-shadow:inset 1px 1px 0 rgba(255,255,255,.7)"></div>
<div class="t" style="left:863px;width:200px;text-align:right;top:367px;color:#000;">516</div>
<div class="a" style="left:366px;top:388px;width:700px;height:1px;background:#a9a9a9;"></div>
<div class="a" style="left:365px;top:365px;width:1px;height:24px;background:#000;"></div>
<div class="a" style="left:465px;top:365px;width:1px;height:24px;background:#a9a9a9;"></div>
<div class="a" style="left:565px;top:365px;width:1px;height:24px;background:#a9a9a9;"></div>
<div class="a" style="left:665px;top:365px;width:1px;height:24px;background:#a9a9a9;"></div>
<div class="a" style="left:765px;top:365px;width:1px;height:24px;background:#a9a9a9;"></div>
<div class="a" style="left:865px;top:365px;width:1px;height:24px;background:#a9a9a9;"></div>
<div class="a" style="left:965px;top:365px;width:1px;height:24px;background:#a9a9a9;"></div>
<div class="a" style="left:1065px;top:365px;width:1px;height:24px;background:#a9a9a9;"></div>
<div class="a" style="left:327px;top:390px;width:38px;height:22px;background:#e8f6e5;box-shadow:inset 0 0 0 1px #f7fbf5"></div>
<div class="t" style="left:246px;width:200px;text-align:center;top:391px;color:#000;">12</div>
<div class="a" style="left:366px;top:389px;width:99px;height:23px;background:#e8f6e5;box-shadow:inset 1px 1px 0 rgba(255,255,255,.7)"></div>
<div class="t" style="left:368px;top:391px;color:#000;">01013</div>
<div class="a" style="left:466px;top:389px;width:99px;height:23px;background:#e8f6e5;box-shadow:inset 1px 1px 0 rgba(255,255,255,.7)"></div>
<div class="t" style="left:468px;top:391px;color:#000;"><span class="c">飓慧科技</span></div>
<div class="a" style="left:566px;top:389px;width:99px;height:23px;background:#e8f6e5;box-shadow:inset 1px 1px 0 rgba(255,255,255,.7)"></div>
<div class="t" style="left:568px;top:391px;color:#000;">0201009</div>
<div class="a" style="left:666px;top:389px;width:99px;height:23px;background:#e8f6e5;box-shadow:inset 1px 1px 0 rgba(255,255,255,.7)"></div>
<div class="t" style="left:668px;top:391px;color:#000;">10S/TR</div>
<div class="a" style="left:766px;top:389px;width:99px;height:23px;background:#e8f6e5;box-shadow:inset 1px 1px 0 rgba(255,255,255,.7)"></div>
<div class="t" style="left:663px;width:200px;text-align:right;top:391px;color:#000;">65</div>
<div class="a" style="left:866px;top:389px;width:99px;height:23px;background:#e8f6e5;box-shadow:inset 1px 1px 0 rgba(255,255,255,.7)"></div>
<div class="t" style="left:763px;width:200px;text-align:right;top:391px;color:#000;">632.74</div>
<div class="a" style="left:966px;top:389px;width:99px;height:23px;background:#e8f6e5;box-shadow:inset 1px 1px 0 rgba(255,255,255,.7)"></div>
<div class="t" style="left:863px;width:200px;text-align:right;top:391px;color:#000;">715</div>
<div class="a" style="left:366px;top:412px;width:700px;height:1px;background:#a9a9a9;"></div>
<div class="a" style="left:365px;top:389px;width:1px;height:24px;background:#000;"></div>
<div class="a" style="left:465px;top:389px;width:1px;height:24px;background:#a9a9a9;"></div>
<div class="a" style="left:565px;top:389px;width:1px;height:24px;background:#a9a9a9;"></div>
<div class="a" style="left:665px;top:389px;width:1px;height:24px;background:#a9a9a9;"></div>
<div class="a" style="left:765px;top:389px;width:1px;height:24px;background:#a9a9a9;"></div>
<div class="a" style="left:865px;top:389px;width:1px;height:24px;background:#a9a9a9;"></div>
<div class="a" style="left:965px;top:389px;width:1px;height:24px;background:#a9a9a9;"></div>
<div class="a" style="left:1065px;top:389px;width:1px;height:24px;background:#a9a9a9;"></div>
<div class="a" style="left:327px;top:414px;width:38px;height:22px;background:#e8f6e5;box-shadow:inset 0 0 0 1px #f7fbf5"></div>
<div class="t" style="left:246px;width:200px;text-align:center;top:415px;color:#000;">13</div>
<div class="a" style="left:366px;top:413px;width:99px;height:23px;background:#f4faf2;box-shadow:inset 1px 1px 0 rgba(255,255,255,.7)"></div>
<div class="t" style="left:368px;top:415px;color:#000;">01013</div>
<div class="a" style="left:466px;top:413px;width:99px;height:23px;background:#f4faf2;box-shadow:inset 1px 1px 0 rgba(255,255,255,.7)"></div>
<div class="t" style="left:468px;top:415px;color:#000;"><span class="c">飓慧科技</span></div>
<div class="a" style="left:566px;top:413px;width:99px;height:23px;background:#f4faf2;box-shadow:inset 1px 1px 0 rgba(255,255,255,.7)"></div>
<div class="t" style="left:568px;top:415px;color:#000;">0201010</div>
<div class="a" style="left:666px;top:413px;width:99px;height:23px;background:#f4faf2;box-shadow:inset 1px 1px 0 rgba(255,255,255,.7)"></div>
<div class="t" style="left:668px;top:415px;color:#000;">40S/2TR</div>
<div class="a" style="left:766px;top:413px;width:99px;height:23px;background:#f4faf2;box-shadow:inset 1px 1px 0 rgba(255,255,255,.7)"></div>
<div class="t" style="left:663px;width:200px;text-align:right;top:415px;color:#000;">45</div>
<div class="a" style="left:866px;top:413px;width:99px;height:23px;background:#f4faf2;box-shadow:inset 1px 1px 0 rgba(255,255,255,.7)"></div>
<div class="t" style="left:763px;width:200px;text-align:right;top:415px;color:#000;">438.05</div>
<div class="a" style="left:966px;top:413px;width:99px;height:23px;background:#f4faf2;box-shadow:inset 1px 1px 0 rgba(255,255,255,.7)"></div>
<div class="t" style="left:863px;width:200px;text-align:right;top:415px;color:#000;">495</div>
<div class="a" style="left:366px;top:436px;width:700px;height:1px;background:#a9a9a9;"></div>
<div class="a" style="left:365px;top:413px;width:1px;height:24px;background:#000;"></div>
<div class="a" style="left:465px;top:413px;width:1px;height:24px;background:#a9a9a9;"></div>
<div class="a" style="left:565px;top:413px;width:1px;height:24px;background:#a9a9a9;"></div>
<div class="a" style="left:665px;top:413px;width:1px;height:24px;background:#a9a9a9;"></div>
<div class="a" style="left:765px;top:413px;width:1px;height:24px;background:#a9a9a9;"></div>
<div class="a" style="left:865px;top:413px;width:1px;height:24px;background:#a9a9a9;"></div>
<div class="a" style="left:965px;top:413px;width:1px;height:24px;background:#a9a9a9;"></div>
<div class="a" style="left:1065px;top:413px;width:1px;height:24px;background:#a9a9a9;"></div>
<div class="a" style="left:327px;top:438px;width:38px;height:22px;background:#e8f6e5;box-shadow:inset 0 0 0 1px #f7fbf5"></div>
<div class="t" style="left:246px;width:200px;text-align:center;top:439px;color:#000;">14</div>
<div class="a" style="left:366px;top:437px;width:99px;height:23px;background:#e8f6e5;box-shadow:inset 1px 1px 0 rgba(255,255,255,.7)"></div>
<div class="t" style="left:368px;top:439px;color:#000;">01013</div>
<div class="a" style="left:466px;top:437px;width:99px;height:23px;background:#e8f6e5;box-shadow:inset 1px 1px 0 rgba(255,255,255,.7)"></div>
<div class="t" style="left:468px;top:439px;color:#000;"><span class="c">飓慧科技</span></div>
<div class="a" style="left:566px;top:437px;width:99px;height:23px;background:#e8f6e5;box-shadow:inset 1px 1px 0 rgba(255,255,255,.7)"></div>
<div class="t" style="left:568px;top:439px;color:#000;">0201011</div>
<div class="a" style="left:666px;top:437px;width:99px;height:23px;background:#e8f6e5;box-shadow:inset 1px 1px 0 rgba(255,255,255,.7)"></div>
<div class="t" style="left:668px;top:439px;color:#000;">13S/TR<span class="c">混纺</span></div>
<div class="a" style="left:766px;top:437px;width:99px;height:23px;background:#e8f6e5;box-shadow:inset 1px 1px 0 rgba(255,255,255,.7)"></div>
<div class="t" style="left:663px;width:200px;text-align:right;top:439px;color:#000;">198</div>
<div class="a" style="left:866px;top:437px;width:99px;height:23px;background:#e8f6e5;box-shadow:inset 1px 1px 0 rgba(255,255,255,.7)"></div>
<div class="t" style="left:763px;width:200px;text-align:right;top:439px;color:#000;">3504.42</div>
<div class="a" style="left:966px;top:437px;width:99px;height:23px;background:#e8f6e5;box-shadow:inset 1px 1px 0 rgba(255,255,255,.7)"></div>
<div class="t" style="left:863px;width:200px;text-align:right;top:439px;color:#000;">3960</div>
<div class="a" style="left:366px;top:460px;width:700px;height:1px;background:#a9a9a9;"></div>
<div class="a" style="left:365px;top:437px;width:1px;height:24px;background:#000;"></div>
<div class="a" style="left:465px;top:437px;width:1px;height:24px;background:#a9a9a9;"></div>
<div class="a" style="left:565px;top:437px;width:1px;height:24px;background:#a9a9a9;"></div>
<div class="a" style="left:665px;top:437px;width:1px;height:24px;background:#a9a9a9;"></div>
<div class="a" style="left:765px;top:437px;width:1px;height:24px;background:#a9a9a9;"></div>
<div class="a" style="left:865px;top:437px;width:1px;height:24px;background:#a9a9a9;"></div>
<div class="a" style="left:965px;top:437px;width:1px;height:24px;background:#a9a9a9;"></div>
<div class="a" style="left:1065px;top:437px;width:1px;height:24px;background:#a9a9a9;"></div>
<div class="a" style="left:327px;top:462px;width:38px;height:22px;background:#e8f6e5;box-shadow:inset 0 0 0 1px #f7fbf5"></div>
<div class="t" style="left:246px;width:200px;text-align:center;top:463px;color:#000;">15</div>
<div class="a" style="left:366px;top:461px;width:99px;height:23px;background:#f4faf2;box-shadow:inset 1px 1px 0 rgba(255,255,255,.7)"></div>
<div class="t" style="left:368px;top:463px;color:#000;">01013</div>
<div class="a" style="left:466px;top:461px;width:99px;height:23px;background:#f4faf2;box-shadow:inset 1px 1px 0 rgba(255,255,255,.7)"></div>
<div class="t" style="left:468px;top:463px;color:#000;"><span class="c">飓慧科技</span></div>
<div class="a" style="left:566px;top:461px;width:99px;height:23px;background:#f4faf2;box-shadow:inset 1px 1px 0 rgba(255,255,255,.7)"></div>
<div class="t" style="left:568px;top:463px;color:#000;">0201012</div>
<div class="a" style="left:666px;top:461px;width:99px;height:23px;background:#f4faf2;box-shadow:inset 1px 1px 0 rgba(255,255,255,.7)"></div>
<div class="t" style="left:668px;top:463px;color:#000;">16S/TR<span class="c">混纺</span></div>
<div class="a" style="left:766px;top:461px;width:99px;height:23px;background:#f4faf2;box-shadow:inset 1px 1px 0 rgba(255,255,255,.7)"></div>
<div class="t" style="left:663px;width:200px;text-align:right;top:463px;color:#000;">53</div>
<div class="a" style="left:866px;top:461px;width:99px;height:23px;background:#f4faf2;box-shadow:inset 1px 1px 0 rgba(255,255,255,.7)"></div>
<div class="t" style="left:763px;width:200px;text-align:right;top:463px;color:#000;">515.93</div>
<div class="a" style="left:966px;top:461px;width:99px;height:23px;background:#f4faf2;box-shadow:inset 1px 1px 0 rgba(255,255,255,.7)"></div>
<div class="t" style="left:863px;width:200px;text-align:right;top:463px;color:#000;">583</div>
<div class="a" style="left:366px;top:484px;width:700px;height:1px;background:#a9a9a9;"></div>
<div class="a" style="left:365px;top:461px;width:1px;height:24px;background:#000;"></div>
<div class="a" style="left:465px;top:461px;width:1px;height:24px;background:#a9a9a9;"></div>
<div class="a" style="left:565px;top:461px;width:1px;height:24px;background:#a9a9a9;"></div>
<div class="a" style="left:665px;top:461px;width:1px;height:24px;background:#a9a9a9;"></div>
<div class="a" style="left:765px;top:461px;width:1px;height:24px;background:#a9a9a9;"></div>
<div class="a" style="left:865px;top:461px;width:1px;height:24px;background:#a9a9a9;"></div>
<div class="a" style="left:965px;top:461px;width:1px;height:24px;background:#a9a9a9;"></div>
<div class="a" style="left:1065px;top:461px;width:1px;height:24px;background:#a9a9a9;"></div>
<div class="a" style="left:327px;top:486px;width:38px;height:22px;background:#e8f6e5;box-shadow:inset 0 0 0 1px #f7fbf5"></div>
<div class="t" style="left:246px;width:200px;text-align:center;top:487px;color:#000;">16</div>
<div class="a" style="left:366px;top:485px;width:99px;height:23px;background:#e8f6e5;box-shadow:inset 1px 1px 0 rgba(255,255,255,.7)"></div>
<div class="t" style="left:368px;top:487px;color:#000;">01013</div>
<div class="a" style="left:466px;top:485px;width:99px;height:23px;background:#e8f6e5;box-shadow:inset 1px 1px 0 rgba(255,255,255,.7)"></div>
<div class="t" style="left:468px;top:487px;color:#000;"><span class="c">飓慧科技</span></div>
<div class="a" style="left:566px;top:485px;width:99px;height:23px;background:#e8f6e5;box-shadow:inset 1px 1px 0 rgba(255,255,255,.7)"></div>
<div class="t" style="left:568px;top:487px;color:#000;">0201013</div>
<div class="a" style="left:666px;top:485px;width:99px;height:23px;background:#e8f6e5;box-shadow:inset 1px 1px 0 rgba(255,255,255,.7)"></div>
<div class="t" style="left:668px;top:487px;color:#000;">16S/TR<span class="c">绒毛</span></div>
<div class="a" style="left:766px;top:485px;width:99px;height:23px;background:#e8f6e5;box-shadow:inset 1px 1px 0 rgba(255,255,255,.7)"></div>
<div class="t" style="left:663px;width:200px;text-align:right;top:487px;color:#000;">22</div>
<div class="a" style="left:866px;top:485px;width:99px;height:23px;background:#e8f6e5;box-shadow:inset 1px 1px 0 rgba(255,255,255,.7)"></div>
<div class="t" style="left:763px;width:200px;text-align:right;top:487px;color:#000;">233.63</div>
<div class="a" style="left:966px;top:485px;width:99px;height:23px;background:#e8f6e5;box-shadow:inset 1px 1px 0 rgba(255,255,255,.7)"></div>
<div class="t" style="left:863px;width:200px;text-align:right;top:487px;color:#000;">264</div>
<div class="a" style="left:366px;top:508px;width:700px;height:1px;background:#a9a9a9;"></div>
<div class="a" style="left:365px;top:485px;width:1px;height:24px;background:#000;"></div>
<div class="a" style="left:465px;top:485px;width:1px;height:24px;background:#a9a9a9;"></div>
<div class="a" style="left:565px;top:485px;width:1px;height:24px;background:#a9a9a9;"></div>
<div class="a" style="left:665px;top:485px;width:1px;height:24px;background:#a9a9a9;"></div>
<div class="a" style="left:765px;top:485px;width:1px;height:24px;background:#a9a9a9;"></div>
<div class="a" style="left:865px;top:485px;width:1px;height:24px;background:#a9a9a9;"></div>
<div class="a" style="left:965px;top:485px;width:1px;height:24px;background:#a9a9a9;"></div>
<div class="a" style="left:1065px;top:485px;width:1px;height:24px;background:#a9a9a9;"></div>
<div class="a" style="left:327px;top:510px;width:38px;height:22px;background:#e8f6e5;box-shadow:inset 0 0 0 1px #f7fbf5"></div>
<div class="t" style="left:246px;width:200px;text-align:center;top:511px;color:#000;">17</div>
<div class="a" style="left:366px;top:509px;width:99px;height:23px;background:#f4faf2;box-shadow:inset 1px 1px 0 rgba(255,255,255,.7)"></div>
<div class="t" style="left:368px;top:511px;color:#000;">01013</div>
<div class="a" style="left:466px;top:509px;width:99px;height:23px;background:#f4faf2;box-shadow:inset 1px 1px 0 rgba(255,255,255,.7)"></div>
<div class="t" style="left:468px;top:511px;color:#000;"><span class="c">飓慧科技</span></div>
<div class="a" style="left:566px;top:509px;width:99px;height:23px;background:#f4faf2;box-shadow:inset 1px 1px 0 rgba(255,255,255,.7)"></div>
<div class="t" style="left:568px;top:511px;color:#000;">0201014</div>
<div class="a" style="left:666px;top:509px;width:99px;height:23px;background:#f4faf2;box-shadow:inset 1px 1px 0 rgba(255,255,255,.7)"></div>
<div class="t" style="left:668px;top:511px;color:#000;">40S/TR<span class="c">段彩</span></div>
<div class="a" style="left:766px;top:509px;width:99px;height:23px;background:#f4faf2;box-shadow:inset 1px 1px 0 rgba(255,255,255,.7)"></div>
<div class="t" style="left:663px;width:200px;text-align:right;top:511px;color:#000;">12</div>
<div class="a" style="left:866px;top:509px;width:99px;height:23px;background:#f4faf2;box-shadow:inset 1px 1px 0 rgba(255,255,255,.7)"></div>
<div class="t" style="left:763px;width:200px;text-align:right;top:511px;color:#000;">127.43</div>
<div class="a" style="left:966px;top:509px;width:99px;height:23px;background:#f4faf2;box-shadow:inset 1px 1px 0 rgba(255,255,255,.7)"></div>
<div class="t" style="left:863px;width:200px;text-align:right;top:511px;color:#000;">144</div>
<div class="a" style="left:366px;top:532px;width:700px;height:1px;background:#a9a9a9;"></div>
<div class="a" style="left:365px;top:509px;width:1px;height:24px;background:#000;"></div>
<div class="a" style="left:465px;top:509px;width:1px;height:24px;background:#a9a9a9;"></div>
<div class="a" style="left:565px;top:509px;width:1px;height:24px;background:#a9a9a9;"></div>
<div class="a" style="left:665px;top:509px;width:1px;height:24px;background:#a9a9a9;"></div>
<div class="a" style="left:765px;top:509px;width:1px;height:24px;background:#a9a9a9;"></div>
<div class="a" style="left:865px;top:509px;width:1px;height:24px;background:#a9a9a9;"></div>
<div class="a" style="left:965px;top:509px;width:1px;height:24px;background:#a9a9a9;"></div>
<div class="a" style="left:1065px;top:509px;width:1px;height:24px;background:#a9a9a9;"></div>
<div class="a" style="left:327px;top:534px;width:38px;height:22px;background:#e8f6e5;box-shadow:inset 0 0 0 1px #f7fbf5"></div>
<div class="t" style="left:246px;width:200px;text-align:center;top:535px;color:#000;">18</div>
<div class="a" style="left:366px;top:533px;width:99px;height:23px;background:#e8f6e5;box-shadow:inset 1px 1px 0 rgba(255,255,255,.7)"></div>
<div class="t" style="left:368px;top:535px;color:#000;">01013</div>
<div class="a" style="left:466px;top:533px;width:99px;height:23px;background:#e8f6e5;box-shadow:inset 1px 1px 0 rgba(255,255,255,.7)"></div>
<div class="t" style="left:468px;top:535px;color:#000;"><span class="c">飓慧科技</span></div>
<div class="a" style="left:566px;top:533px;width:99px;height:23px;background:#e8f6e5;box-shadow:inset 1px 1px 0 rgba(255,255,255,.7)"></div>
<div class="t" style="left:568px;top:535px;color:#000;">0201015</div>
<div class="a" style="left:666px;top:533px;width:99px;height:23px;background:#e8f6e5;box-shadow:inset 1px 1px 0 rgba(255,255,255,.7)"></div>
<div class="t" style="left:668px;top:535px;color:#000;">40S/TR<span class="c">竹节</span></div>
<div class="a" style="left:766px;top:533px;width:99px;height:23px;background:#e8f6e5;box-shadow:inset 1px 1px 0 rgba(255,255,255,.7)"></div>
<div class="t" style="left:663px;width:200px;text-align:right;top:535px;color:#000;">11</div>
<div class="a" style="left:866px;top:533px;width:99px;height:23px;background:#e8f6e5;box-shadow:inset 1px 1px 0 rgba(255,255,255,.7)"></div>
<div class="t" style="left:763px;width:200px;text-align:right;top:535px;color:#000;">116.81</div>
<div class="a" style="left:966px;top:533px;width:99px;height:23px;background:#e8f6e5;box-shadow:inset 1px 1px 0 rgba(255,255,255,.7)"></div>
<div class="t" style="left:863px;width:200px;text-align:right;top:535px;color:#000;">132</div>
<div class="a" style="left:366px;top:556px;width:700px;height:1px;background:#a9a9a9;"></div>
<div class="a" style="left:365px;top:533px;width:1px;height:24px;background:#000;"></div>
<div class="a" style="left:465px;top:533px;width:1px;height:24px;background:#a9a9a9;"></div>
<div class="a" style="left:565px;top:533px;width:1px;height:24px;background:#a9a9a9;"></div>
<div class="a" style="left:665px;top:533px;width:1px;height:24px;background:#a9a9a9;"></div>
<div class="a" style="left:765px;top:533px;width:1px;height:24px;background:#a9a9a9;"></div>
<div class="a" style="left:865px;top:533px;width:1px;height:24px;background:#a9a9a9;"></div>
<div class="a" style="left:965px;top:533px;width:1px;height:24px;background:#a9a9a9;"></div>
<div class="a" style="left:1065px;top:533px;width:1px;height:24px;background:#a9a9a9;"></div>
<div class="a" style="left:327px;top:558px;width:38px;height:22px;background:#e8f6e5;box-shadow:inset 0 0 0 1px #f7fbf5"></div>
<div class="t" style="left:246px;width:200px;text-align:center;top:559px;color:#000;">19</div>
<div class="a" style="left:366px;top:557px;width:99px;height:23px;background:#f4faf2;box-shadow:inset 1px 1px 0 rgba(255,255,255,.7)"></div>
<div class="t" style="left:368px;top:559px;color:#000;">01013</div>
<div class="a" style="left:466px;top:557px;width:99px;height:23px;background:#f4faf2;box-shadow:inset 1px 1px 0 rgba(255,255,255,.7)"></div>
<div class="t" style="left:468px;top:559px;color:#000;"><span class="c">飓慧科技</span></div>
<div class="a" style="left:566px;top:557px;width:99px;height:23px;background:#f4faf2;box-shadow:inset 1px 1px 0 rgba(255,255,255,.7)"></div>
<div class="t" style="left:568px;top:559px;color:#000;">0201017</div>
<div class="a" style="left:666px;top:557px;width:99px;height:23px;background:#f4faf2;box-shadow:inset 1px 1px 0 rgba(255,255,255,.7)"></div>
<div class="t" style="left:668px;top:559px;color:#000;">50D<span class="c">人造丝</span></div>
<div class="a" style="left:766px;top:557px;width:99px;height:23px;background:#f4faf2;box-shadow:inset 1px 1px 0 rgba(255,255,255,.7)"></div>
<div class="t" style="left:663px;width:200px;text-align:right;top:559px;color:#000;">11</div>
<div class="a" style="left:866px;top:557px;width:99px;height:23px;background:#f4faf2;box-shadow:inset 1px 1px 0 rgba(255,255,255,.7)"></div>
<div class="t" style="left:763px;width:200px;text-align:right;top:559px;color:#000;">116.81</div>
<div class="a" style="left:966px;top:557px;width:99px;height:23px;background:#f4faf2;box-shadow:inset 1px 1px 0 rgba(255,255,255,.7)"></div>
<div class="t" style="left:863px;width:200px;text-align:right;top:559px;color:#000;">132</div>
<div class="a" style="left:366px;top:580px;width:700px;height:1px;background:#a9a9a9;"></div>
<div class="a" style="left:365px;top:557px;width:1px;height:24px;background:#000;"></div>
<div class="a" style="left:465px;top:557px;width:1px;height:24px;background:#a9a9a9;"></div>
<div class="a" style="left:565px;top:557px;width:1px;height:24px;background:#a9a9a9;"></div>
<div class="a" style="left:665px;top:557px;width:1px;height:24px;background:#a9a9a9;"></div>
<div class="a" style="left:765px;top:557px;width:1px;height:24px;background:#a9a9a9;"></div>
<div class="a" style="left:865px;top:557px;width:1px;height:24px;background:#a9a9a9;"></div>
<div class="a" style="left:965px;top:557px;width:1px;height:24px;background:#a9a9a9;"></div>
<div class="a" style="left:1065px;top:557px;width:1px;height:24px;background:#a9a9a9;"></div>
<div class="a" style="left:327px;top:582px;width:38px;height:22px;background:#e8f6e5;box-shadow:inset 0 0 0 1px #f7fbf5"></div>
<div class="t" style="left:246px;width:200px;text-align:center;top:583px;color:#000;">20</div>
<div class="a" style="left:366px;top:581px;width:99px;height:23px;background:#e8f6e5;box-shadow:inset 1px 1px 0 rgba(255,255,255,.7)"></div>
<div class="t" style="left:368px;top:583px;color:#000;">01013</div>
<div class="a" style="left:466px;top:581px;width:99px;height:23px;background:#e8f6e5;box-shadow:inset 1px 1px 0 rgba(255,255,255,.7)"></div>
<div class="t" style="left:468px;top:583px;color:#000;"><span class="c">飓慧科技</span></div>
<div class="a" style="left:566px;top:581px;width:99px;height:23px;background:#e8f6e5;box-shadow:inset 1px 1px 0 rgba(255,255,255,.7)"></div>
<div class="t" style="left:568px;top:583px;color:#000;">0201018</div>
<div class="a" style="left:666px;top:581px;width:99px;height:23px;background:#e8f6e5;box-shadow:inset 1px 1px 0 rgba(255,255,255,.7)"></div>
<div class="t" style="left:668px;top:583px;color:#000;">50S/2TRW</div>
<div class="a" style="left:766px;top:581px;width:99px;height:23px;background:#e8f6e5;box-shadow:inset 1px 1px 0 rgba(255,255,255,.7)"></div>
<div class="t" style="left:663px;width:200px;text-align:right;top:583px;color:#000;">15</div>
<div class="a" style="left:866px;top:581px;width:99px;height:23px;background:#e8f6e5;box-shadow:inset 1px 1px 0 rgba(255,255,255,.7)"></div>
<div class="t" style="left:763px;width:200px;text-align:right;top:583px;color:#000;">159.29</div>
<div class="a" style="left:966px;top:581px;width:99px;height:23px;background:#e8f6e5;box-shadow:inset 1px 1px 0 rgba(255,255,255,.7)"></div>
<div class="t" style="left:863px;width:200px;text-align:right;top:583px;color:#000;">180</div>
<div class="a" style="left:366px;top:604px;width:700px;height:1px;background:#a9a9a9;"></div>
<div class="a" style="left:365px;top:581px;width:1px;height:24px;background:#000;"></div>
<div class="a" style="left:465px;top:581px;width:1px;height:24px;background:#a9a9a9;"></div>
<div class="a" style="left:565px;top:581px;width:1px;height:24px;background:#a9a9a9;"></div>
<div class="a" style="left:665px;top:581px;width:1px;height:24px;background:#a9a9a9;"></div>
<div class="a" style="left:765px;top:581px;width:1px;height:24px;background:#a9a9a9;"></div>
<div class="a" style="left:865px;top:581px;width:1px;height:24px;background:#a9a9a9;"></div>
<div class="a" style="left:965px;top:581px;width:1px;height:24px;background:#a9a9a9;"></div>
<div class="a" style="left:1065px;top:581px;width:1px;height:24px;background:#a9a9a9;"></div>
<div class="a" style="left:327px;top:606px;width:38px;height:22px;background:#e8f6e5;box-shadow:inset 0 0 0 1px #f7fbf5"></div>
<div class="t" style="left:246px;width:200px;text-align:center;top:607px;color:#000;">21</div>
<div class="a" style="left:366px;top:605px;width:99px;height:23px;background:#f4faf2;box-shadow:inset 1px 1px 0 rgba(255,255,255,.7)"></div>
<div class="t" style="left:368px;top:607px;color:#000;">01013</div>
<div class="a" style="left:466px;top:605px;width:99px;height:23px;background:#f4faf2;box-shadow:inset 1px 1px 0 rgba(255,255,255,.7)"></div>
<div class="t" style="left:468px;top:607px;color:#000;"><span class="c">飓慧科技</span></div>
<div class="a" style="left:566px;top:605px;width:99px;height:23px;background:#f4faf2;box-shadow:inset 1px 1px 0 rgba(255,255,255,.7)"></div>
<div class="t" style="left:568px;top:607px;color:#000;">0201019</div>
<div class="a" style="left:666px;top:605px;width:99px;height:23px;background:#f4faf2;box-shadow:inset 1px 1px 0 rgba(255,255,255,.7)"></div>
<div class="t" style="left:668px;top:607px;color:#000;">30S/TR<span class="c">竹节纱</span></div>
<div class="a" style="left:766px;top:605px;width:99px;height:23px;background:#f4faf2;box-shadow:inset 1px 1px 0 rgba(255,255,255,.7)"></div>
<div class="t" style="left:663px;width:200px;text-align:right;top:607px;color:#000;">11</div>
<div class="a" style="left:866px;top:605px;width:99px;height:23px;background:#f4faf2;box-shadow:inset 1px 1px 0 rgba(255,255,255,.7)"></div>
<div class="t" style="left:763px;width:200px;text-align:right;top:607px;color:#000;">116.81</div>
<div class="a" style="left:966px;top:605px;width:99px;height:23px;background:#f4faf2;box-shadow:inset 1px 1px 0 rgba(255,255,255,.7)"></div>
<div class="t" style="left:863px;width:200px;text-align:right;top:607px;color:#000;">132</div>
<div class="a" style="left:366px;top:628px;width:700px;height:1px;background:#a9a9a9;"></div>
<div class="a" style="left:365px;top:605px;width:1px;height:24px;background:#000;"></div>
<div class="a" style="left:465px;top:605px;width:1px;height:24px;background:#a9a9a9;"></div>
<div class="a" style="left:565px;top:605px;width:1px;height:24px;background:#a9a9a9;"></div>
<div class="a" style="left:665px;top:605px;width:1px;height:24px;background:#a9a9a9;"></div>
<div class="a" style="left:765px;top:605px;width:1px;height:24px;background:#a9a9a9;"></div>
<div class="a" style="left:865px;top:605px;width:1px;height:24px;background:#a9a9a9;"></div>
<div class="a" style="left:965px;top:605px;width:1px;height:24px;background:#a9a9a9;"></div>
<div class="a" style="left:1065px;top:605px;width:1px;height:24px;background:#a9a9a9;"></div>
<div class="a" style="left:327px;top:630px;width:38px;height:22px;background:#e8f6e5;box-shadow:inset 0 0 0 1px #f7fbf5"></div>
<div class="t" style="left:246px;width:200px;text-align:center;top:631px;color:#000;">22</div>
<div class="a" style="left:366px;top:629px;width:99px;height:23px;background:#e8f6e5;box-shadow:inset 1px 1px 0 rgba(255,255,255,.7)"></div>
<div class="t" style="left:368px;top:631px;color:#000;">01013</div>
<div class="a" style="left:466px;top:629px;width:99px;height:23px;background:#e8f6e5;box-shadow:inset 1px 1px 0 rgba(255,255,255,.7)"></div>
<div class="t" style="left:468px;top:631px;color:#000;"><span class="c">飓慧科技</span></div>
<div class="a" style="left:566px;top:629px;width:99px;height:23px;background:#e8f6e5;box-shadow:inset 1px 1px 0 rgba(255,255,255,.7)"></div>
<div class="t" style="left:568px;top:631px;color:#000;">0201020</div>
<div class="a" style="left:666px;top:629px;width:99px;height:23px;background:#e8f6e5;box-shadow:inset 1px 1px 0 rgba(255,255,255,.7)"></div>
<div class="t" style="left:668px;top:631px;color:#000;">13S/TR</div>
<div class="a" style="left:766px;top:629px;width:99px;height:23px;background:#e8f6e5;box-shadow:inset 1px 1px 0 rgba(255,255,255,.7)"></div>
<div class="t" style="left:663px;width:200px;text-align:right;top:631px;color:#000;">13</div>
<div class="a" style="left:866px;top:629px;width:99px;height:23px;background:#e8f6e5;box-shadow:inset 1px 1px 0 rgba(255,255,255,.7)"></div>
<div class="t" style="left:763px;width:200px;text-align:right;top:631px;color:#000;">138.05</div>
<div class="a" style="left:966px;top:629px;width:99px;height:23px;background:#e8f6e5;box-shadow:inset 1px 1px 0 rgba(255,255,255,.7)"></div>
<div class="t" style="left:863px;width:200px;text-align:right;top:631px;color:#000;">156</div>
<div class="a" style="left:366px;top:652px;width:700px;height:1px;background:#a9a9a9;"></div>
<div class="a" style="left:365px;top:629px;width:1px;height:24px;background:#000;"></div>
<div class="a" style="left:465px;top:629px;width:1px;height:24px;background:#a9a9a9;"></div>
<div class="a" style="left:565px;top:629px;width:1px;height:24px;background:#a9a9a9;"></div>
<div class="a" style="left:665px;top:629px;width:1px;height:24px;background:#a9a9a9;"></div>
<div class="a" style="left:765px;top:629px;width:1px;height:24px;background:#a9a9a9;"></div>
<div class="a" style="left:865px;top:629px;width:1px;height:24px;background:#a9a9a9;"></div>
<div class="a" style="left:965px;top:629px;width:1px;height:24px;background:#a9a9a9;"></div>
<div class="a" style="left:1065px;top:629px;width:1px;height:24px;background:#a9a9a9;"></div>
<div class="a" style="left:327px;top:654px;width:38px;height:22px;background:#e8f6e5;box-shadow:inset 0 0 0 1px #f7fbf5"></div>
<div class="t" style="left:246px;width:200px;text-align:center;top:655px;color:#000;">23</div>
<div class="a" style="left:366px;top:653px;width:99px;height:23px;background:#f4faf2;box-shadow:inset 1px 1px 0 rgba(255,255,255,.7)"></div>
<div class="t" style="left:368px;top:655px;color:#000;">01013</div>
<div class="a" style="left:466px;top:653px;width:99px;height:23px;background:#f4faf2;box-shadow:inset 1px 1px 0 rgba(255,255,255,.7)"></div>
<div class="t" style="left:468px;top:655px;color:#000;"><span class="c">飓慧科技</span></div>
<div class="a" style="left:566px;top:653px;width:99px;height:23px;background:#f4faf2;box-shadow:inset 1px 1px 0 rgba(255,255,255,.7)"></div>
<div class="t" style="left:568px;top:655px;color:#000;">0201021</div>
<div class="a" style="left:666px;top:653px;width:99px;height:23px;background:#f4faf2;box-shadow:inset 1px 1px 0 rgba(255,255,255,.7)"></div>
<div class="t" style="left:668px;top:655px;color:#000;">16S/TR</div>
<div class="a" style="left:766px;top:653px;width:99px;height:23px;background:#f4faf2;box-shadow:inset 1px 1px 0 rgba(255,255,255,.7)"></div>
<div class="t" style="left:663px;width:200px;text-align:right;top:655px;color:#000;">43</div>
<div class="a" style="left:866px;top:653px;width:99px;height:23px;background:#f4faf2;box-shadow:inset 1px 1px 0 rgba(255,255,255,.7)"></div>
<div class="t" style="left:763px;width:200px;text-align:right;top:655px;color:#000;">418.58</div>
<div class="a" style="left:966px;top:653px;width:99px;height:23px;background:#f4faf2;box-shadow:inset 1px 1px 0 rgba(255,255,255,.7)"></div>
<div class="t" style="left:863px;width:200px;text-align:right;top:655px;color:#000;">473</div>
<div class="a" style="left:366px;top:676px;width:700px;height:1px;background:#a9a9a9;"></div>
<div class="a" style="left:365px;top:653px;width:1px;height:24px;background:#000;"></div>
<div class="a" style="left:465px;top:653px;width:1px;height:24px;background:#a9a9a9;"></div>
<div class="a" style="left:565px;top:653px;width:1px;height:24px;background:#a9a9a9;"></div>
<div class="a" style="left:665px;top:653px;width:1px;height:24px;background:#a9a9a9;"></div>
<div class="a" style="left:765px;top:653px;width:1px;height:24px;background:#a9a9a9;"></div>
<div class="a" style="left:865px;top:653px;width:1px;height:24px;background:#a9a9a9;"></div>
<div class="a" style="left:965px;top:653px;width:1px;height:24px;background:#a9a9a9;"></div>
<div class="a" style="left:1065px;top:653px;width:1px;height:24px;background:#a9a9a9;"></div>
<div class="a" style="left:327px;top:678px;width:38px;height:22px;background:#e8f6e5;box-shadow:inset 0 0 0 1px #f7fbf5"></div>
<div class="t" style="left:246px;width:200px;text-align:center;top:679px;color:#000;">24</div>
<div class="a" style="left:366px;top:677px;width:99px;height:23px;background:#e8f6e5;box-shadow:inset 1px 1px 0 rgba(255,255,255,.7)"></div>
<div class="t" style="left:368px;top:679px;color:#000;">01013</div>
<div class="a" style="left:466px;top:677px;width:99px;height:23px;background:#e8f6e5;box-shadow:inset 1px 1px 0 rgba(255,255,255,.7)"></div>
<div class="t" style="left:468px;top:679px;color:#000;"><span class="c">飓慧科技</span></div>
<div class="a" style="left:566px;top:677px;width:99px;height:23px;background:#e8f6e5;box-shadow:inset 1px 1px 0 rgba(255,255,255,.7)"></div>
<div class="t" style="left:568px;top:679px;color:#000;">0201023</div>
<div class="a" style="left:666px;top:677px;width:99px;height:23px;background:#e8f6e5;box-shadow:inset 1px 1px 0 rgba(255,255,255,.7)"></div>
<div class="t" style="left:668px;top:679px;color:#000;">38S/TR<span class="c">双色</span></div>
<div class="a" style="left:766px;top:677px;width:99px;height:23px;background:#e8f6e5;box-shadow:inset 1px 1px 0 rgba(255,255,255,.7)"></div>
<div class="t" style="left:663px;width:200px;text-align:right;top:679px;color:#000;">34</div>
<div class="a" style="left:866px;top:677px;width:99px;height:23px;background:#e8f6e5;box-shadow:inset 1px 1px 0 rgba(255,255,255,.7)"></div>
<div class="t" style="left:763px;width:200px;text-align:right;top:679px;color:#000;">541.59</div>
<div class="a" style="left:966px;top:677px;width:99px;height:23px;background:#e8f6e5;box-shadow:inset 1px 1px 0 rgba(255,255,255,.7)"></div>
<div class="t" style="left:863px;width:200px;text-align:right;top:679px;color:#000;">612</div>
<div class="a" style="left:366px;top:700px;width:700px;height:1px;background:#a9a9a9;"></div>
<div class="a" style="left:365px;top:677px;width:1px;height:24px;background:#000;"></div>
<div class="a" style="left:465px;top:677px;width:1px;height:24px;background:#a9a9a9;"></div>
<div class="a" style="left:565px;top:677px;width:1px;height:24px;background:#a9a9a9;"></div>
<div class="a" style="left:665px;top:677px;width:1px;height:24px;background:#a9a9a9;"></div>
<div class="a" style="left:765px;top:677px;width:1px;height:24px;background:#a9a9a9;"></div>
<div class="a" style="left:865px;top:677px;width:1px;height:24px;background:#a9a9a9;"></div>
<div class="a" style="left:965px;top:677px;width:1px;height:24px;background:#a9a9a9;"></div>
<div class="a" style="left:1065px;top:677px;width:1px;height:24px;background:#a9a9a9;"></div>
<div class="a" style="left:327px;top:702px;width:38px;height:22px;background:#e8f6e5;box-shadow:inset 0 0 0 1px #f7fbf5"></div>
<div class="t" style="left:246px;width:200px;text-align:center;top:703px;color:#000;">25</div>
<div class="a" style="left:366px;top:701px;width:99px;height:23px;background:#f4faf2;box-shadow:inset 1px 1px 0 rgba(255,255,255,.7)"></div>
<div class="t" style="left:368px;top:703px;color:#000;">01013</div>
<div class="a" style="left:466px;top:701px;width:99px;height:23px;background:#f4faf2;box-shadow:inset 1px 1px 0 rgba(255,255,255,.7)"></div>
<div class="t" style="left:468px;top:703px;color:#000;"><span class="c">飓慧科技</span></div>
<div class="a" style="left:566px;top:701px;width:99px;height:23px;background:#f4faf2;box-shadow:inset 1px 1px 0 rgba(255,255,255,.7)"></div>
<div class="t" style="left:568px;top:703px;color:#000;">0201024</div>
<div class="a" style="left:666px;top:701px;width:99px;height:23px;background:#f4faf2;box-shadow:inset 1px 1px 0 rgba(255,255,255,.7)"></div>
<div class="t" style="left:668px;top:703px;color:#000;">40S/TR <span class="c">涡流纺</span></div>
<div class="a" style="left:766px;top:701px;width:99px;height:23px;background:#f4faf2;box-shadow:inset 1px 1px 0 rgba(255,255,255,.7)"></div>
<div class="t" style="left:663px;width:200px;text-align:right;top:703px;color:#000;">32</div>
<div class="a" style="left:866px;top:701px;width:99px;height:23px;background:#f4faf2;box-shadow:inset 1px 1px 0 rgba(255,255,255,.7)"></div>
<div class="t" style="left:763px;width:200px;text-align:right;top:703px;color:#000;">311.5</div>
<div class="a" style="left:966px;top:701px;width:99px;height:23px;background:#f4faf2;box-shadow:inset 1px 1px 0 rgba(255,255,255,.7)"></div>
<div class="t" style="left:863px;width:200px;text-align:right;top:703px;color:#000;">352</div>
<div class="a" style="left:366px;top:724px;width:700px;height:1px;background:#a9a9a9;"></div>
<div class="a" style="left:365px;top:701px;width:1px;height:24px;background:#000;"></div>
<div class="a" style="left:465px;top:701px;width:1px;height:24px;background:#a9a9a9;"></div>
<div class="a" style="left:565px;top:701px;width:1px;height:24px;background:#a9a9a9;"></div>
<div class="a" style="left:665px;top:701px;width:1px;height:24px;background:#a9a9a9;"></div>
<div class="a" style="left:765px;top:701px;width:1px;height:24px;background:#a9a9a9;"></div>
<div class="a" style="left:865px;top:701px;width:1px;height:24px;background:#a9a9a9;"></div>
<div class="a" style="left:965px;top:701px;width:1px;height:24px;background:#a9a9a9;"></div>
<div class="a" style="left:1065px;top:701px;width:1px;height:24px;background:#a9a9a9;"></div>
<div class="a" style="left:327px;top:726px;width:38px;height:22px;background:#e8f6e5;box-shadow:inset 0 0 0 1px #f7fbf5"></div>
<div class="t" style="left:246px;width:200px;text-align:center;top:727px;color:#000;">26</div>
<div class="a" style="left:366px;top:725px;width:99px;height:23px;background:#e8f6e5;box-shadow:inset 1px 1px 0 rgba(255,255,255,.7)"></div>
<div class="t" style="left:368px;top:727px;color:#000;">01013</div>
<div class="a" style="left:466px;top:725px;width:99px;height:23px;background:#e8f6e5;box-shadow:inset 1px 1px 0 rgba(255,255,255,.7)"></div>
<div class="t" style="left:468px;top:727px;color:#000;"><span class="c">飓慧科技</span></div>
<div class="a" style="left:566px;top:725px;width:99px;height:23px;background:#e8f6e5;box-shadow:inset 1px 1px 0 rgba(255,255,255,.7)"></div>
<div class="t" style="left:568px;top:727px;color:#000;">0201025</div>
<div class="a" style="left:666px;top:725px;width:99px;height:23px;background:#e8f6e5;box-shadow:inset 1px 1px 0 rgba(255,255,255,.7)"></div>
<div class="t" style="left:668px;top:727px;color:#000;">36S/TR</div>
<div class="a" style="left:766px;top:725px;width:99px;height:23px;background:#e8f6e5;box-shadow:inset 1px 1px 0 rgba(255,255,255,.7)"></div>
<div class="t" style="left:663px;width:200px;text-align:right;top:727px;color:#000;">43</div>
<div class="a" style="left:866px;top:725px;width:99px;height:23px;background:#e8f6e5;box-shadow:inset 1px 1px 0 rgba(255,255,255,.7)"></div>
<div class="t" style="left:763px;width:200px;text-align:right;top:727px;color:#000;">456.64</div>
<div class="a" style="left:966px;top:725px;width:99px;height:23px;background:#e8f6e5;box-shadow:inset 1px 1px 0 rgba(255,255,255,.7)"></div>
<div class="t" style="left:863px;width:200px;text-align:right;top:727px;color:#000;">516</div>
<div class="a" style="left:366px;top:748px;width:700px;height:1px;background:#a9a9a9;"></div>
<div class="a" style="left:365px;top:725px;width:1px;height:24px;background:#000;"></div>
<div class="a" style="left:465px;top:725px;width:1px;height:24px;background:#a9a9a9;"></div>
<div class="a" style="left:565px;top:725px;width:1px;height:24px;background:#a9a9a9;"></div>
<div class="a" style="left:665px;top:725px;width:1px;height:24px;background:#a9a9a9;"></div>
<div class="a" style="left:765px;top:725px;width:1px;height:24px;background:#a9a9a9;"></div>
<div class="a" style="left:865px;top:725px;width:1px;height:24px;background:#a9a9a9;"></div>
<div class="a" style="left:965px;top:725px;width:1px;height:24px;background:#a9a9a9;"></div>
<div class="a" style="left:1065px;top:725px;width:1px;height:24px;background:#a9a9a9;"></div>
<div class="a" style="left:327px;top:750px;width:38px;height:22px;background:#e8f6e5;box-shadow:inset 0 0 0 1px #f7fbf5"></div>
<div class="t" style="left:246px;width:200px;text-align:center;top:751px;color:#000;">27</div>
<div class="a" style="left:366px;top:749px;width:99px;height:23px;background:#f4faf2;box-shadow:inset 1px 1px 0 rgba(255,255,255,.7)"></div>
<div class="t" style="left:368px;top:751px;color:#000;">02003</div>
<div class="a" style="left:466px;top:749px;width:99px;height:23px;background:#f4faf2;box-shadow:inset 1px 1px 0 rgba(255,255,255,.7)"></div>
<div class="t" style="left:468px;top:751px;color:#000;"><span class="c">太象</span></div>
<div class="a" style="left:566px;top:749px;width:99px;height:23px;background:#f4faf2;box-shadow:inset 1px 1px 0 rgba(255,255,255,.7)"></div>
<div class="t" style="left:568px;top:751px;color:#000;">02001</div>
<div class="a" style="left:666px;top:749px;width:99px;height:23px;background:#f4faf2;box-shadow:inset 1px 1px 0 rgba(255,255,255,.7)"></div>
<div class="t" style="left:668px;top:751px;color:#000;">40S/TR AB<span class="c">纱</span></div>
<div class="a" style="left:766px;top:749px;width:99px;height:23px;background:#f4faf2;box-shadow:inset 1px 1px 0 rgba(255,255,255,.7)"></div>
<div class="t" style="left:663px;width:200px;text-align:right;top:751px;color:#000;">122</div>
<div class="a" style="left:866px;top:749px;width:99px;height:23px;background:#f4faf2;box-shadow:inset 1px 1px 0 rgba(255,255,255,.7)"></div>
<div class="t" style="left:763px;width:200px;text-align:right;top:751px;color:#000;">1079.65</div>
<div class="a" style="left:966px;top:749px;width:99px;height:23px;background:#f4faf2;box-shadow:inset 1px 1px 0 rgba(255,255,255,.7)"></div>
<div class="t" style="left:863px;width:200px;text-align:right;top:751px;color:#000;">1220</div>
<div class="a" style="left:366px;top:772px;width:700px;height:1px;background:#a9a9a9;"></div>
<div class="a" style="left:365px;top:749px;width:1px;height:24px;background:#000;"></div>
<div class="a" style="left:465px;top:749px;width:1px;height:24px;background:#a9a9a9;"></div>
<div class="a" style="left:565px;top:749px;width:1px;height:24px;background:#a9a9a9;"></div>
<div class="a" style="left:665px;top:749px;width:1px;height:24px;background:#a9a9a9;"></div>
<div class="a" style="left:765px;top:749px;width:1px;height:24px;background:#a9a9a9;"></div>
<div class="a" style="left:865px;top:749px;width:1px;height:24px;background:#a9a9a9;"></div>
<div class="a" style="left:965px;top:749px;width:1px;height:24px;background:#a9a9a9;"></div>
<div class="a" style="left:1065px;top:749px;width:1px;height:24px;background:#a9a9a9;"></div>
<div class="a" style="left:326px;top:148px;width:40px;height:1px;background:#000;"></div>
<div class="a" style="left:326px;top:149px;width:40px;height:1px;background:#000;"></div>
<div class="a" style="left:326px;top:172px;width:40px;height:1px;background:#000;"></div>
<div class="a" style="left:326px;top:173px;width:40px;height:1px;background:#000;"></div>
<div class="a" style="left:326px;top:196px;width:40px;height:1px;background:#000;"></div>
<div class="a" style="left:326px;top:197px;width:40px;height:1px;background:#000;"></div>
<div class="a" style="left:326px;top:220px;width:40px;height:1px;background:#000;"></div>
<div class="a" style="left:326px;top:221px;width:40px;height:1px;background:#000;"></div>
<div class="a" style="left:326px;top:244px;width:40px;height:1px;background:#000;"></div>
<div class="a" style="left:326px;top:245px;width:40px;height:1px;background:#000;"></div>
<div class="a" style="left:326px;top:268px;width:40px;height:1px;background:#000;"></div>
<div class="a" style="left:326px;top:269px;width:40px;height:1px;background:#000;"></div>
<div class="a" style="left:326px;top:292px;width:40px;height:1px;background:#000;"></div>
<div class="a" style="left:326px;top:293px;width:40px;height:1px;background:#000;"></div>
<div class="a" style="left:326px;top:316px;width:40px;height:1px;background:#000;"></div>
<div class="a" style="left:326px;top:317px;width:40px;height:1px;background:#000;"></div>
<div class="a" style="left:326px;top:340px;width:40px;height:1px;background:#000;"></div>
<div class="a" style="left:326px;top:341px;width:40px;height:1px;background:#000;"></div>
<div class="a" style="left:326px;top:364px;width:40px;height:1px;background:#000;"></div>
<div class="a" style="left:326px;top:365px;width:40px;height:1px;background:#000;"></div>
<div class="a" style="left:326px;top:388px;width:40px;height:1px;background:#000;"></div>
<div class="a" style="left:326px;top:389px;width:40px;height:1px;background:#000;"></div>
<div class="a" style="left:326px;top:412px;width:40px;height:1px;background:#000;"></div>
<div class="a" style="left:326px;top:413px;width:40px;height:1px;background:#000;"></div>
<div class="a" style="left:326px;top:436px;width:40px;height:1px;background:#000;"></div>
<div class="a" style="left:326px;top:437px;width:40px;height:1px;background:#000;"></div>
<div class="a" style="left:326px;top:460px;width:40px;height:1px;background:#000;"></div>
<div class="a" style="left:326px;top:461px;width:40px;height:1px;background:#000;"></div>
<div class="a" style="left:326px;top:484px;width:40px;height:1px;background:#000;"></div>
<div class="a" style="left:326px;top:485px;width:40px;height:1px;background:#000;"></div>
<div class="a" style="left:326px;top:508px;width:40px;height:1px;background:#000;"></div>
<div class="a" style="left:326px;top:509px;width:40px;height:1px;background:#000;"></div>
<div class="a" style="left:326px;top:532px;width:40px;height:1px;background:#000;"></div>
<div class="a" style="left:326px;top:533px;width:40px;height:1px;background:#000;"></div>
<div class="a" style="left:326px;top:556px;width:40px;height:1px;background:#000;"></div>
<div class="a" style="left:326px;top:557px;width:40px;height:1px;background:#000;"></div>
<div class="a" style="left:326px;top:580px;width:40px;height:1px;background:#000;"></div>
<div class="a" style="left:326px;top:581px;width:40px;height:1px;background:#000;"></div>
<div class="a" style="left:326px;top:604px;width:40px;height:1px;background:#000;"></div>
<div class="a" style="left:326px;top:605px;width:40px;height:1px;background:#000;"></div>
<div class="a" style="left:326px;top:628px;width:40px;height:1px;background:#000;"></div>
<div class="a" style="left:326px;top:629px;width:40px;height:1px;background:#000;"></div>
<div class="a" style="left:326px;top:652px;width:40px;height:1px;background:#000;"></div>
<div class="a" style="left:326px;top:653px;width:40px;height:1px;background:#000;"></div>
<div class="a" style="left:326px;top:676px;width:40px;height:1px;background:#000;"></div>
<div class="a" style="left:326px;top:677px;width:40px;height:1px;background:#000;"></div>
<div class="a" style="left:326px;top:700px;width:40px;height:1px;background:#000;"></div>
<div class="a" style="left:326px;top:701px;width:40px;height:1px;background:#000;"></div>
<div class="a" style="left:326px;top:724px;width:40px;height:1px;background:#000;"></div>
<div class="a" style="left:326px;top:725px;width:40px;height:1px;background:#000;"></div>
<div class="a" style="left:326px;top:748px;width:40px;height:1px;background:#000;"></div>
<div class="a" style="left:326px;top:749px;width:40px;height:1px;background:#000;"></div>
<div class="a" style="left:326px;top:772px;width:40px;height:1px;background:#000;"></div>
<div class="a" style="left:326px;top:125px;width:40px;height:1px;background:#000;"></div>
<div class="a" style="left:326px;top:100px;width:1px;height:673px;background:#000;"></div>
<div class="a" style="left:365px;top:100px;width:1px;height:673px;background:#000;"></div>
<div class="a" style="left:326px;top:790px;width:740px;height:1px;background:#a9a9a9;"></div>
<div class="a" style="left:326px;top:791px;width:40px;height:27px;background:#e7f2e3;"></div>
<div class="a" style="left:366px;top:791px;width:700px;height:27px;background:#217346;"></div>
<div class="a" style="left:325px;top:818px;width:741px;height:1px;background:#a9a9a9;"></div>
<div class="a" style="left:325px;top:819px;width:819px;height:1px;background:#a9a9a9;"></div>
<div class="a" style="left:1065px;top:790px;width:1px;height:29px;background:#a9a9a9;"></div>
<div class="a" style="left:326px;top:790px;width:1px;height:30px;background:#a9a9a9;"></div>
<div class="a" style="left:768px;top:793px;width:94px;height:21px;border:1px solid #a9a9a9"></div>
<div class="t" style="left:663px;width:200px;text-align:right;top:795px;color:#fff;">2235.30</div>
<div class="a" style="left:868px;top:793px;width:94px;height:21px;border:1px solid #a9a9a9"></div>
<div class="t" style="left:763px;width:200px;text-align:right;top:795px;color:#fff;">41203.09</div>
<div class="a" style="left:968px;top:793px;width:93px;height:21px;border:1px solid #a9a9a9"></div>
<div class="t" style="left:862px;width:200px;text-align:right;top:795px;color:#fff;">46559.50</div>
</body></html>
